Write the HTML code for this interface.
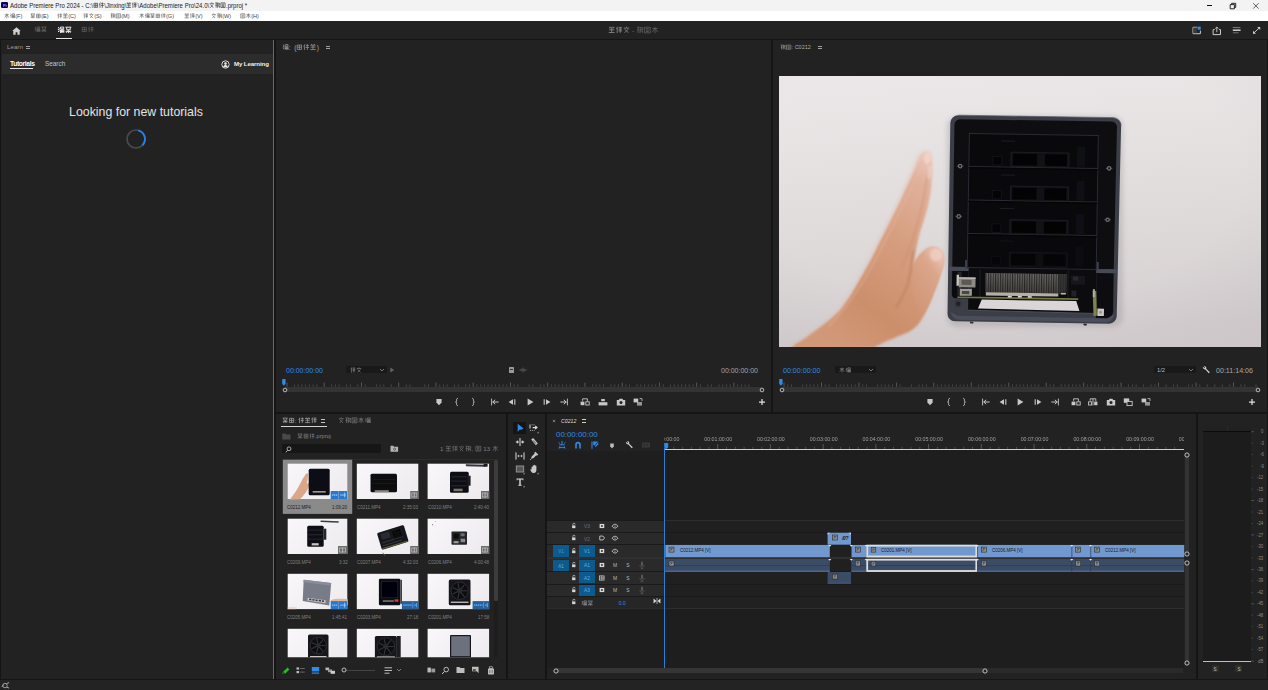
<!DOCTYPE html>
<html><head><meta charset="utf-8"><title>Adobe Premiere Pro 2024</title>
<style>
html,body{margin:0;padding:0;overflow:hidden;}
body{width:1268px;height:690px;overflow:hidden;background:#151515;position:relative;font-family:"Liberation Sans",sans-serif;}
body>div,body>svg,body>span.t,.a{position:absolute;}
span.t{white-space:nowrap;display:block;}
svg{overflow:visible;}
svg.ci{display:inline-block;margin:-3px 0;vertical-align:calc(3px - 0.12em);overflow:hidden;}
</style></head><body>
<!-- chrome -->
<div style="left:0px;top:0px;width:1268px;height:11px;background:#f3f3f3;"></div>
<div style="left:0px;top:11px;width:1268px;height:10px;background:#ffffff;"></div>
<div style="left:1.3px;top:2px;width:6.7px;height:6.2px;background:#00005b;border-radius:1.2px"></div>
<span class="t" style="left:2.5px;top:3px;font-size:4.2px;line-height:4.2px;color:#9999ff;transform:translateY(0.73px) rotate(0.01deg);font-weight:bold;letter-spacing:-0.2px">Pr</span>
<span class="t" style="left:10.3px;top:2px;font-size:6.05px;line-height:6.05px;color:#1a1a1a;transform:translateY(0.36px) rotate(0.01deg) scaleY(1.12);;transform-origin:0 50%;transform-origin:50% 2.94px">Adobe Premiere Pro 2024 - C:\<svg class="ci" width="11.20" height="5.60" viewBox="0 0 20 10" style="opacity:0.8"><g fill="none" stroke="#1a1a1a" stroke-width="1.3"><path transform="translate(0.4,0) scale(0.92,1)" d="M1.5 2h7v6.5h-7zM5 2v6.5M1.5 5.2h7"/><path transform="translate(10.4,0) scale(0.92,1)" d="M3 0.8L1 4.4M2.2 3v6.4M4.4 2.6h5M4 5.6h5.6M6.8 0.8v8.6"/></g></svg>\Jinxing\<svg class="ci" width="11.20" height="5.60" viewBox="0 0 20 10" style="opacity:0.8"><g fill="none" stroke="#1a1a1a" stroke-width="1.3"><path transform="translate(0.4,0) scale(0.92,1)" d="M1 2.2h8M1 5h8M0.6 8.6h8.8M5 2.2v6.4M3 0.6l-1 1.6M7 0.6l1 1.6"/><path transform="translate(10.4,0) scale(0.92,1)" d="M2.2 0.8v8.6M0.6 3.4l1.6-1M4.2 1.6h5M4.2 4h5M4.2 6.4h5.2M6.6 1.6v7.6"/></g></svg>\Adobe\Premiere Pro\24.0\<svg class="ci" width="16.80" height="5.60" viewBox="0 0 30 10" style="opacity:0.8"><g fill="none" stroke="#1a1a1a" stroke-width="1.3"><path transform="translate(0.4,0) scale(0.92,1)" d="M5 0.6v1.4M1 2.6h8M2.4 4l5.4 5M7.6 4L2.2 9"/><path transform="translate(10.4,0) scale(0.92,1)" d="M1 1.4h3.4M2.6 1.4v7.6M1 5h3M5.4 0.8v8.4M5.4 2h4v2.6h-4M5.4 6.4h4M9.2 6.4v2.8"/><path transform="translate(20.4,0) scale(0.92,1)" d="M1 1.4h8v7.4H1zM3 3.4h4M3 5.2h4M3 7h4"/></g></svg>.prproj *</span>
<div style="left:1206.6px;top:5.3px;width:5.8px;height:0.9px;background:#111;"></div>
<svg style="left:1229px;top:2px;" width="8" height="8" viewBox="0 0 8 8"><path d="M1.2 2.6h4.2v4.2H1.2z M2.6 2.6V1.3h4.1v4.1H5.4" fill="none" stroke="#111" stroke-width="0.9"/></svg>
<svg style="left:1252px;top:2px;" width="8" height="8" viewBox="0 0 8 8"><path d="M1.2 1.2L6.6 6.6M6.6 1.2L1.2 6.6" fill="none" stroke="#333" stroke-width="0.75"/></svg>
<span class="t" style="left:4px;top:14px;font-size:5.6px;line-height:5.6px;color:#444;transform:translateY(0.02px) rotate(0.01deg);"><svg class="ci" width="11.20" height="5.60" viewBox="0 0 20 10" style="opacity:0.75"><g fill="none" stroke="#333" stroke-width="1.2"><path transform="translate(0.4,0) scale(0.92,1)" d="M1 3h8M5 0.8v8.6M4.6 3.4L1 8M5.4 3.4L9 8"/><path transform="translate(10.4,0) scale(0.92,1)" d="M1 1.6l2 1.4-2 2h2.4M1 7.6l2.2-1M4.6 1.4h4.6v2.4H4.6zM4.6 5h4.8v4M4.6 5v4.2M6.2 5v4M7.8 5v4M4.6 7h4.8"/></g></svg>(F)</span>
<span class="t" style="left:30px;top:14px;font-size:5.6px;line-height:5.6px;color:#444;transform:translateY(0.02px) rotate(0.01deg);"><svg class="ci" width="11.20" height="5.60" viewBox="0 0 20 10" style="opacity:0.75"><g fill="none" stroke="#333" stroke-width="1.2"><path transform="translate(0.4,0) scale(0.92,1)" d="M0.8 1.6h8.4M2.6 1.6v3.4h5V1.6M1 7h8M5 5v4.4M2 9l1.6-2M8 9L6.4 7"/><path transform="translate(10.4,0) scale(0.92,1)" d="M1.5 2h7v6.5h-7zM5 2v6.5M1.5 5.2h7"/></g></svg>(E)</span>
<span class="t" style="left:56.5px;top:14px;font-size:5.6px;line-height:5.6px;color:#444;transform:translateY(0.02px) rotate(0.01deg);"><svg class="ci" width="11.20" height="5.60" viewBox="0 0 20 10" style="opacity:0.75"><g fill="none" stroke="#333" stroke-width="1.2"><path transform="translate(0.4,0) scale(0.92,1)" d="M3 0.8L1 4.4M2.2 3v6.4M4.4 2.6h5M4 5.6h5.6M6.8 0.8v8.6"/><path transform="translate(10.4,0) scale(0.92,1)" d="M1 2.2h8M1 5h8M0.6 8.6h8.8M5 2.2v6.4M3 0.6l-1 1.6M7 0.6l1 1.6"/></g></svg>(C)</span>
<span class="t" style="left:83px;top:14px;font-size:5.6px;line-height:5.6px;color:#444;transform:translateY(0.02px) rotate(0.01deg);"><svg class="ci" width="11.20" height="5.60" viewBox="0 0 20 10" style="opacity:0.75"><g fill="none" stroke="#333" stroke-width="1.2"><path transform="translate(0.4,0) scale(0.92,1)" d="M2.2 0.8v8.6M0.6 3.4l1.6-1M4.2 1.6h5M4.2 4h5M4.2 6.4h5.2M6.6 1.6v7.6"/><path transform="translate(10.4,0) scale(0.92,1)" d="M5 0.6v1.4M1 2.6h8M2.4 4l5.4 5M7.6 4L2.2 9"/></g></svg>(S)</span>
<span class="t" style="left:109.5px;top:14px;font-size:5.6px;line-height:5.6px;color:#444;transform:translateY(0.02px) rotate(0.01deg);"><svg class="ci" width="11.20" height="5.60" viewBox="0 0 20 10" style="opacity:0.75"><g fill="none" stroke="#333" stroke-width="1.2"><path transform="translate(0.4,0) scale(0.92,1)" d="M1 1.4h3.4M2.6 1.4v7.6M1 5h3M5.4 0.8v8.4M5.4 2h4v2.6h-4M5.4 6.4h4M9.2 6.4v2.8"/><path transform="translate(10.4,0) scale(0.92,1)" d="M1 1.4h8v7.4H1zM3 3.4h4M3 5.2h4M3 7h4"/></g></svg>(M)</span>
<span class="t" style="left:138.5px;top:14px;font-size:5.6px;line-height:5.6px;color:#444;transform:translateY(0.02px) rotate(0.01deg);"><svg class="ci" width="27.00" height="5.40" viewBox="0 0 50 10" style="opacity:0.75"><g fill="none" stroke="#333" stroke-width="1.2"><path transform="translate(0.4,0) scale(0.92,1)" d="M1 3h8M5 0.8v8.6M4.6 3.4L1 8M5.4 3.4L9 8"/><path transform="translate(10.4,0) scale(0.92,1)" d="M1 1.6l2 1.4-2 2h2.4M1 7.6l2.2-1M4.6 1.4h4.6v2.4H4.6zM4.6 5h4.8v4M4.6 5v4.2M6.2 5v4M7.8 5v4M4.6 7h4.8"/><path transform="translate(20.4,0) scale(0.92,1)" d="M0.8 1.6h8.4M2.6 1.6v3.4h5V1.6M1 7h8M5 5v4.4M2 9l1.6-2M8 9L6.4 7"/><path transform="translate(30.4,0) scale(0.92,1)" d="M1.5 2h7v6.5h-7zM5 2v6.5M1.5 5.2h7"/><path transform="translate(40.4,0) scale(0.92,1)" d="M3 0.8L1 4.4M2.2 3v6.4M4.4 2.6h5M4 5.6h5.6M6.8 0.8v8.6"/></g></svg>(G)</span>
<span class="t" style="left:184px;top:14px;font-size:5.6px;line-height:5.6px;color:#444;transform:translateY(0.02px) rotate(0.01deg);"><svg class="ci" width="11.20" height="5.60" viewBox="0 0 20 10" style="opacity:0.75"><g fill="none" stroke="#333" stroke-width="1.2"><path transform="translate(0.4,0) scale(0.92,1)" d="M1 2.2h8M1 5h8M0.6 8.6h8.8M5 2.2v6.4M3 0.6l-1 1.6M7 0.6l1 1.6"/><path transform="translate(10.4,0) scale(0.92,1)" d="M2.2 0.8v8.6M0.6 3.4l1.6-1M4.2 1.6h5M4.2 4h5M4.2 6.4h5.2M6.6 1.6v7.6"/></g></svg>(V)</span>
<span class="t" style="left:211px;top:14px;font-size:5.6px;line-height:5.6px;color:#444;transform:translateY(0.02px) rotate(0.01deg);"><svg class="ci" width="11.20" height="5.60" viewBox="0 0 20 10" style="opacity:0.75"><g fill="none" stroke="#333" stroke-width="1.2"><path transform="translate(0.4,0) scale(0.92,1)" d="M5 0.6v1.4M1 2.6h8M2.4 4l5.4 5M7.6 4L2.2 9"/><path transform="translate(10.4,0) scale(0.92,1)" d="M1 1.4h3.4M2.6 1.4v7.6M1 5h3M5.4 0.8v8.4M5.4 2h4v2.6h-4M5.4 6.4h4M9.2 6.4v2.8"/></g></svg>(W)</span>
<span class="t" style="left:240px;top:14px;font-size:5.6px;line-height:5.6px;color:#444;transform:translateY(0.02px) rotate(0.01deg);"><svg class="ci" width="11.20" height="5.60" viewBox="0 0 20 10" style="opacity:0.75"><g fill="none" stroke="#333" stroke-width="1.2"><path transform="translate(0.4,0) scale(0.92,1)" d="M1 1.4h8v7.4H1zM3 3.4h4M3 5.2h4M3 7h4"/><path transform="translate(10.4,0) scale(0.92,1)" d="M1 3h8M5 0.8v8.6M4.6 3.4L1 8M5.4 3.4L9 8"/></g></svg>(H)</span>
<div style="left:0px;top:21px;width:1268px;height:18px;background:#222222;"></div>
<div style="left:0px;top:39px;width:1268px;height:1px;background:#151515;"></div>
<svg style="left:11.5px;top:26.5px;" width="9" height="8" viewBox="0 0 9 8"><path d="M4.5 0.3L0.2 4.1h1.1v3.6h2.3V5.2h1.8v2.5h2.3V4.1h1.1z" fill="#cfcfcf"/></svg>
<span class="t" style="left:34px;top:27.10px;font-size:6.6px;line-height:6.6px;height:6.6px"><svg class="ci" width="13.20" height="6.60" viewBox="0 0 20 10" style="opacity:0.55"><g fill="none" stroke="#aaa" stroke-width="1.0"><path transform="translate(0.4,0) scale(0.92,1)" d="M1 1.6l2 1.4-2 2h2.4M1 7.6l2.2-1M4.6 1.4h4.6v2.4H4.6zM4.6 5h4.8v4M4.6 5v4.2M6.2 5v4M7.8 5v4M4.6 7h4.8"/><path transform="translate(10.4,0) scale(0.92,1)" d="M0.8 1.6h8.4M2.6 1.6v3.4h5V1.6M1 7h8M5 5v4.4M2 9l1.6-2M8 9L6.4 7"/></g></svg></span>
<span class="t" style="left:56.5px;top:26.60px;font-size:7.6px;line-height:7.6px;height:7.6px"><svg class="ci" width="15.20" height="7.60" viewBox="0 0 20 10" style="opacity:0.95"><g fill="none" stroke="#fff" stroke-width="1.3"><path transform="translate(0.4,0) scale(0.92,1)" d="M1 1.6l2 1.4-2 2h2.4M1 7.6l2.2-1M4.6 1.4h4.6v2.4H4.6zM4.6 5h4.8v4M4.6 5v4.2M6.2 5v4M7.8 5v4M4.6 7h4.8"/><path transform="translate(10.4,0) scale(0.92,1)" d="M0.8 1.6h8.4M2.6 1.6v3.4h5V1.6M1 7h8M5 5v4.4M2 9l1.6-2M8 9L6.4 7"/></g></svg></span>
<div style="left:56px;top:37.8px;width:16px;height:1.3px;background:#e6e6e6;"></div>
<span class="t" style="left:81px;top:27.10px;font-size:6.6px;line-height:6.6px;height:6.6px"><svg class="ci" width="13.20" height="6.60" viewBox="0 0 20 10" style="opacity:0.5"><g fill="none" stroke="#aaa" stroke-width="1.0"><path transform="translate(0.4,0) scale(0.92,1)" d="M1.5 2h7v6.5h-7zM5 2v6.5M1.5 5.2h7"/><path transform="translate(10.4,0) scale(0.92,1)" d="M3 0.8L1 4.4M2.2 3v6.4M4.4 2.6h5M4 5.6h5.6M6.8 0.8v8.6"/></g></svg></span>
<span class="t" style="left:607.5px;top:28px;font-size:6.5px;line-height:6.5px;color:#666;transform:translateY(0.17px) rotate(0.01deg);"><svg class="ci" width="22.20" height="7.40" viewBox="0 0 30 10" style="opacity:0.75"><g fill="none" stroke="#bbb" stroke-width="1.05"><path transform="translate(0.4,0) scale(0.92,1)" d="M1 2.2h8M1 5h8M0.6 8.6h8.8M5 2.2v6.4M3 0.6l-1 1.6M7 0.6l1 1.6"/><path transform="translate(10.4,0) scale(0.92,1)" d="M2.2 0.8v8.6M0.6 3.4l1.6-1M4.2 1.6h5M4.2 4h5M4.2 6.4h5.2M6.6 1.6v7.6"/><path transform="translate(20.4,0) scale(0.92,1)" d="M5 0.6v1.4M1 2.6h8M2.4 4l5.4 5M7.6 4L2.2 9"/></g></svg> - <svg class="ci" width="22.80" height="7.60" viewBox="0 0 30 10" style="opacity:0.55"><g fill="none" stroke="#999" stroke-width="1.05"><path transform="translate(0.4,0) scale(0.92,1)" d="M1 1.4h3.4M2.6 1.4v7.6M1 5h3M5.4 0.8v8.4M5.4 2h4v2.6h-4M5.4 6.4h4M9.2 6.4v2.8"/><path transform="translate(10.4,0) scale(0.92,1)" d="M1 1.4h8v7.4H1zM3 3.4h4M3 5.2h4M3 7h4"/><path transform="translate(20.4,0) scale(0.92,1)" d="M1 3h8M5 0.8v8.6M4.6 3.4L1 8M5.4 3.4L9 8"/></g></svg></span>
<svg style="left:1192px;top:26px;" width="10" height="9" viewBox="0 0 10 9"><path d="M1 1.3h4.2M1 1.3v6.4h7.4V4.6" fill="none" stroke="#ccc" stroke-width="1"/><rect x="1.3" y="1.6" width="3.6" height="5.6" fill="#3a3a3a"/><rect x="5.6" y="0.6" width="3.1" height="3.1" fill="#2d8ceb"/></svg>
<svg style="left:1212px;top:25.5px;" width="10" height="9.5" viewBox="0 0 10 9.5"><path d="M2.6 3.6H1.1v5h7.4v-5H7" fill="none" stroke="#ccc" stroke-width="1"/><path d="M4.8 6.2V1.2M3.2 2.6L4.8 1l1.6 1.6" fill="none" stroke="#ccc" stroke-width="0.9"/></svg>
<svg style="left:1232px;top:26px;" width="10" height="9" viewBox="0 0 10 9"><path d="M0.8 1.6h7.6" stroke="#999" stroke-width="0.8"/><path d="M0.8 4.2h7.8" stroke="#d0d0d0" stroke-width="1.5"/><path d="M0.8 6.8h5.8" stroke="#888" stroke-width="0.8"/></svg>
<svg style="left:1251.5px;top:26px;" width="10" height="9" viewBox="0 0 10 9"><path d="M1.4 7.4L7.8 1.4" stroke="#ccc" stroke-width="1"/><path d="M5.2 1h3v3z M1 4.8v3h3z" fill="#ccc"/></svg>
<div style="left:0px;top:679px;width:1268px;height:1px;background:#151515;"></div>
<div style="left:0px;top:680px;width:1268px;height:10px;background:#232323;"></div>
<svg style="left:1px;top:681.5px;" width="9" height="7" viewBox="0 0 9 7"><circle cx="4" cy="3.6" r="2.2" fill="none" stroke="#aaa" stroke-width="0.9"/><path d="M0.6 4.6l2-1.6M5.6 1.6l2.6-1M6 5.4l2 0.6" stroke="#ccc" stroke-width="0.8"/></svg>
<!-- layout -->
<div style="left:0px;top:40px;width:1268px;height:639px;background:#151515;"></div>
<div style="left:1px;top:40px;width:272px;height:639px;background:#222222;"></div>
<div style="left:272.8px;top:40px;width:1.5px;height:639px;background:#2b78c5;"></div>
<div style="left:276px;top:40px;width:495px;height:372px;background:#222222;"></div>
<div style="left:773px;top:40px;width:494px;height:372px;background:#222222;"></div>
<div style="left:276px;top:414px;width:230px;height:265px;background:#222222;"></div>
<div style="left:508px;top:414px;width:37px;height:265px;background:#222222;"></div>
<div style="left:547px;top:414px;width:649px;height:265px;background:#222222;"></div>
<div style="left:1198px;top:414px;width:69px;height:265px;background:#222222;"></div>
<!-- learn -->
<span class="t" style="left:6.8px;top:44px;font-size:6.2px;line-height:6.2px;color:#9a9a9a;transform:translateY(0.06px) rotate(0.01deg);">Learn</span>
<div style="left:26px;top:46.4px;width:4.4px;height:0.7px;background:#a0a0a0;"></div>
<div style="left:26px;top:48px;width:4.4px;height:0.7px;background:#a0a0a0;"></div>
<div style="left:2px;top:54px;width:270.8px;height:20px;background:#2c2c2c;"></div>
<span class="t" style="left:9.8px;top:61px;font-size:6.7px;line-height:6.7px;color:#fff;transform:translateY(0.17px) rotate(0.01deg);font-weight:bold;letter-spacing:-0.35px">Tutorials</span>
<div style="left:9.8px;top:67.9px;width:23.3px;height:1.3px;background:#e8e8e8;"></div>
<span class="t" style="left:45px;top:61px;font-size:6.4px;line-height:6.4px;color:#c4c4c4;transform:translateY(0.17px) rotate(0.01deg);">Search</span>
<svg style="left:220.5px;top:59.5px;" width="9" height="9" viewBox="0 0 9 9"><circle cx="4.5" cy="4.5" r="3.7" fill="none" stroke="#e6e6e6" stroke-width="0.9"/><circle cx="4.5" cy="3.6" r="1.3" fill="#e6e6e6"/><path d="M2.2 7.2c0.3-1.8 1.2-2.2 2.3-2.2s2 0.4 2.3 2.2z" fill="#e6e6e6"/></svg>
<span class="t" style="left:234px;top:61px;font-size:6.1px;line-height:6.1px;color:#f0f0f0;transform:translateY(0.16px) rotate(0.01deg);font-weight:bold;letter-spacing:-0.1px">My Learning</span>
<span class="t" style="left:-14.0px;width:300px;text-align:center;top:105px;font-size:12.35px;line-height:12.35px;color:#e4e4e4;transform:translateY(0.94px) rotate(0.01deg);">Looking for new tutorials</span>
<svg style="left:125px;top:128.3px;" width="22" height="22" viewBox="0 0 22 22"><circle cx="11" cy="11" r="9" fill="none" stroke="#4a4a4a" stroke-width="1.700"/><path d="M13.200 2.300A9 9 0 0 1 17.400 17.300" fill="none" stroke="#2680eb" stroke-width="1.900"/></svg>
<!-- monitors -->
<span class="t" style="left:282px;top:44px;font-size:6.6px;line-height:6.6px;color:#aaa;transform:translateY(0.67px) rotate(0.01deg);"><svg class="ci" width="6.80" height="6.80" viewBox="0 0 10 10" style="opacity:0.8"><g fill="none" stroke="#bbb" stroke-width="1.1"><path transform="translate(0.4,0) scale(0.92,1)" d="M1 1.6l2 1.4-2 2h2.4M1 7.6l2.2-1M4.6 1.4h4.6v2.4H4.6zM4.6 5h4.8v4M4.6 5v4.2M6.2 5v4M7.8 5v4M4.6 7h4.8"/></g></svg>:<svg class="ci" width="3.50" height="3.50" viewBox="0 0 10 10" style="opacity:0.0"><g fill="none" stroke="#bbb" stroke-width="1"><path transform="translate(0.4,0) scale(0.92,1)" d="M0.8 1.6h8.4M2.6 1.6v3.4h5V1.6M1 7h8M5 5v4.4M2 9l1.6-2M8 9L6.4 7"/></g></svg>(<svg class="ci" width="20.40" height="6.80" viewBox="0 0 30 10" style="opacity:0.8"><g fill="none" stroke="#bbb" stroke-width="1.1"><path transform="translate(0.4,0) scale(0.92,1)" d="M1.5 2h7v6.5h-7zM5 2v6.5M1.5 5.2h7"/><path transform="translate(10.4,0) scale(0.92,1)" d="M3 0.8L1 4.4M2.2 3v6.4M4.4 2.6h5M4 5.6h5.6M6.8 0.8v8.6"/><path transform="translate(20.4,0) scale(0.92,1)" d="M1 2.2h8M1 5h8M0.6 8.6h8.8M5 2.2v6.4M3 0.6l-1 1.6M7 0.6l1 1.6"/></g></svg>)</span>
<div style="left:326px;top:46.4px;width:4.4px;height:0.7px;background:#a0a0a0;"></div>
<div style="left:326px;top:48px;width:4.4px;height:0.7px;background:#a0a0a0;"></div>
<span class="t" style="left:286px;top:366px;font-size:7px;line-height:7px;color:#2d8ceb;transform:translateY(0.96px) rotate(0.01deg);">00:00:00:00</span>
<div style="left:346px;top:366.2px;width:41px;height:7px;background:#191919;border-radius:1px"></div>
<span class="t" style="left:349.5px;top:367.30px;font-size:6px;line-height:6px;height:6px"><svg class="ci" width="12.00" height="6.00" viewBox="0 0 20 10" style="opacity:0.7"><g fill="none" stroke="#bbb" stroke-width="1.1"><path transform="translate(0.4,0) scale(0.92,1)" d="M2.2 0.8v8.6M0.6 3.4l1.6-1M4.2 1.6h5M4.2 4h5M4.2 6.4h5.2M6.6 1.6v7.6"/><path transform="translate(10.4,0) scale(0.92,1)" d="M5 0.6v1.4M1 2.6h8M2.4 4l5.4 5M7.6 4L2.2 9"/></g></svg></span>
<svg style="left:377.0px;top:364.9px;" width="10" height="10" viewBox="0 0 10 10"><path d="M3 4l2 2 2-2" fill="none" stroke="#808080" stroke-width="0.9"/></svg>
<svg style="left:386.5px;top:365.2px;" width="10" height="10" viewBox="0 0 10 10"><path d="M3.400 2.600v4.800L7 5z" fill="#666"/></svg>
<div style="left:508.5px;top:367px;width:5.4px;height:5.6px;background:#9a9a9a;border-radius:0.6px"></div>
<div style="left:509.6px;top:369.4px;width:3.2px;height:0.9px;background:#333;"></div>
<svg style="left:518.0px;top:365.0px;" width="10" height="10" viewBox="0 0 10 10"><path d="M1.400 5h2.200M6.400 5h2.200M5 2.600v4.800M3.200 3.800L4.200 5l-1 1.200M6.800 3.800L5.800 5l1 1.200" fill="none" stroke="#666" stroke-width="0.8"/></svg>
<span class="t" style="right:510.5px;top:366px;font-size:7px;line-height:7px;color:#a6a6a6;transform:translateY(0.96px) rotate(0.01deg);">00:00:00:00</span>
<svg style="left:0px;top:0px;pointer-events:none" width="1268" height="690" viewBox="0 0 1268 690"><path d="M287.0 386.8v-4.2" stroke="#8a8a8a" stroke-width="0.7" opacity="0.75"/><path d="M294.4 386.8v-2.4" stroke="#8a8a8a" stroke-width="0.7" opacity="0.5"/><path d="M298.2 386.8v-2.4" stroke="#8a8a8a" stroke-width="0.7" opacity="0.5"/><path d="M301.9 386.8v-2.4" stroke="#8a8a8a" stroke-width="0.7" opacity="0.5"/><path d="M305.6 386.8v-2.4" stroke="#8a8a8a" stroke-width="0.7" opacity="0.5"/><path d="M309.3 386.8v-2.4" stroke="#8a8a8a" stroke-width="0.7" opacity="0.5"/><path d="M313.1 386.8v-2.4" stroke="#8a8a8a" stroke-width="0.7" opacity="0.5"/><path d="M316.8 386.8v-2.4" stroke="#8a8a8a" stroke-width="0.7" opacity="0.5"/><path d="M324.2 386.8v-4.2" stroke="#8a8a8a" stroke-width="0.7" opacity="0.75"/><path d="M331.7 386.8v-2.4" stroke="#8a8a8a" stroke-width="0.7" opacity="0.5"/><path d="M335.4 386.8v-2.4" stroke="#8a8a8a" stroke-width="0.7" opacity="0.5"/><path d="M339.1 386.8v-2.4" stroke="#8a8a8a" stroke-width="0.7" opacity="0.5"/><path d="M346.6 386.8v-2.4" stroke="#8a8a8a" stroke-width="0.7" opacity="0.5"/><path d="M350.3 386.8v-2.4" stroke="#8a8a8a" stroke-width="0.7" opacity="0.5"/><path d="M357.8 386.8v-2.4" stroke="#8a8a8a" stroke-width="0.7" opacity="0.5"/><path d="M361.5 386.8v-4.2" stroke="#8a8a8a" stroke-width="0.7" opacity="0.75"/><path d="M365.2 386.8v-2.4" stroke="#8a8a8a" stroke-width="0.7" opacity="0.5"/><path d="M376.4 386.8v-2.4" stroke="#8a8a8a" stroke-width="0.7" opacity="0.5"/><path d="M380.1 386.8v-2.4" stroke="#8a8a8a" stroke-width="0.7" opacity="0.5"/><path d="M383.8 386.8v-2.4" stroke="#8a8a8a" stroke-width="0.7" opacity="0.5"/><path d="M391.3 386.8v-2.4" stroke="#8a8a8a" stroke-width="0.7" opacity="0.5"/><path d="M398.7 386.8v-4.2" stroke="#8a8a8a" stroke-width="0.7" opacity="0.75"/><path d="M406.2 386.8v-2.4" stroke="#8a8a8a" stroke-width="0.7" opacity="0.5"/><path d="M409.9 386.8v-2.4" stroke="#8a8a8a" stroke-width="0.7" opacity="0.5"/><path d="M424.8 386.8v-2.4" stroke="#8a8a8a" stroke-width="0.7" opacity="0.5"/><path d="M428.5 386.8v-2.4" stroke="#8a8a8a" stroke-width="0.7" opacity="0.5"/><path d="M436.0 386.8v-4.2" stroke="#8a8a8a" stroke-width="0.7" opacity="0.75"/><path d="M439.7 386.8v-2.4" stroke="#8a8a8a" stroke-width="0.7" opacity="0.5"/><path d="M443.4 386.8v-2.4" stroke="#8a8a8a" stroke-width="0.7" opacity="0.5"/><path d="M447.1 386.8v-2.4" stroke="#8a8a8a" stroke-width="0.7" opacity="0.5"/><path d="M454.6 386.8v-2.4" stroke="#8a8a8a" stroke-width="0.7" opacity="0.5"/><path d="M458.3 386.8v-2.4" stroke="#8a8a8a" stroke-width="0.7" opacity="0.5"/><path d="M465.8 386.8v-2.4" stroke="#8a8a8a" stroke-width="0.7" opacity="0.5"/><path d="M469.5 386.8v-2.4" stroke="#8a8a8a" stroke-width="0.7" opacity="0.5"/><path d="M473.2 386.8v-4.2" stroke="#8a8a8a" stroke-width="0.7" opacity="0.75"/><path d="M476.9 386.8v-2.4" stroke="#8a8a8a" stroke-width="0.7" opacity="0.5"/><path d="M480.7 386.8v-2.4" stroke="#8a8a8a" stroke-width="0.7" opacity="0.5"/><path d="M484.4 386.8v-2.4" stroke="#8a8a8a" stroke-width="0.7" opacity="0.5"/><path d="M488.1 386.8v-2.4" stroke="#8a8a8a" stroke-width="0.7" opacity="0.5"/><path d="M491.8 386.8v-2.4" stroke="#8a8a8a" stroke-width="0.7" opacity="0.5"/><path d="M495.6 386.8v-2.4" stroke="#8a8a8a" stroke-width="0.7" opacity="0.5"/><path d="M499.3 386.8v-2.4" stroke="#8a8a8a" stroke-width="0.7" opacity="0.5"/><path d="M503.0 386.8v-2.4" stroke="#8a8a8a" stroke-width="0.7" opacity="0.5"/><path d="M506.7 386.8v-2.4" stroke="#8a8a8a" stroke-width="0.7" opacity="0.5"/><path d="M510.5 386.8v-4.2" stroke="#8a8a8a" stroke-width="0.7" opacity="0.75"/><path d="M514.2 386.8v-2.4" stroke="#8a8a8a" stroke-width="0.7" opacity="0.5"/><path d="M517.9 386.8v-2.4" stroke="#8a8a8a" stroke-width="0.7" opacity="0.5"/><path d="M529.1 386.8v-2.4" stroke="#8a8a8a" stroke-width="0.7" opacity="0.5"/><path d="M532.8 386.8v-2.4" stroke="#8a8a8a" stroke-width="0.7" opacity="0.5"/><path d="M540.3 386.8v-2.4" stroke="#8a8a8a" stroke-width="0.7" opacity="0.5"/><path d="M544.0 386.8v-2.4" stroke="#8a8a8a" stroke-width="0.7" opacity="0.5"/><path d="M547.7 386.8v-4.2" stroke="#8a8a8a" stroke-width="0.7" opacity="0.75"/><path d="M551.4 386.8v-2.4" stroke="#8a8a8a" stroke-width="0.7" opacity="0.5"/><path d="M555.2 386.8v-2.4" stroke="#8a8a8a" stroke-width="0.7" opacity="0.5"/><path d="M558.9 386.8v-2.4" stroke="#8a8a8a" stroke-width="0.7" opacity="0.5"/><path d="M562.6 386.8v-2.4" stroke="#8a8a8a" stroke-width="0.7" opacity="0.5"/><path d="M566.3 386.8v-2.4" stroke="#8a8a8a" stroke-width="0.7" opacity="0.5"/><path d="M570.1 386.8v-2.4" stroke="#8a8a8a" stroke-width="0.7" opacity="0.5"/><path d="M573.8 386.8v-2.4" stroke="#8a8a8a" stroke-width="0.7" opacity="0.5"/><path d="M577.5 386.8v-2.4" stroke="#8a8a8a" stroke-width="0.7" opacity="0.5"/><path d="M585.0 386.8v-4.2" stroke="#8a8a8a" stroke-width="0.7" opacity="0.75"/><path d="M592.4 386.8v-2.4" stroke="#8a8a8a" stroke-width="0.7" opacity="0.5"/><path d="M596.1 386.8v-2.4" stroke="#8a8a8a" stroke-width="0.7" opacity="0.5"/><path d="M599.9 386.8v-2.4" stroke="#8a8a8a" stroke-width="0.7" opacity="0.5"/><path d="M603.6 386.8v-2.4" stroke="#8a8a8a" stroke-width="0.7" opacity="0.5"/><path d="M611.0 386.8v-2.4" stroke="#8a8a8a" stroke-width="0.7" opacity="0.5"/><path d="M614.7 386.8v-2.4" stroke="#8a8a8a" stroke-width="0.7" opacity="0.5"/><path d="M618.5 386.8v-2.4" stroke="#8a8a8a" stroke-width="0.7" opacity="0.5"/><path d="M622.2 386.8v-4.2" stroke="#8a8a8a" stroke-width="0.7" opacity="0.75"/><path d="M625.9 386.8v-2.4" stroke="#8a8a8a" stroke-width="0.7" opacity="0.5"/><path d="M629.6 386.8v-2.4" stroke="#8a8a8a" stroke-width="0.7" opacity="0.5"/><path d="M637.1 386.8v-2.4" stroke="#8a8a8a" stroke-width="0.7" opacity="0.5"/><path d="M640.8 386.8v-2.4" stroke="#8a8a8a" stroke-width="0.7" opacity="0.5"/><path d="M644.5 386.8v-2.4" stroke="#8a8a8a" stroke-width="0.7" opacity="0.5"/><path d="M648.3 386.8v-2.4" stroke="#8a8a8a" stroke-width="0.7" opacity="0.5"/><path d="M652.0 386.8v-2.4" stroke="#8a8a8a" stroke-width="0.7" opacity="0.5"/><path d="M655.7 386.8v-2.4" stroke="#8a8a8a" stroke-width="0.7" opacity="0.5"/><path d="M659.4 386.8v-4.2" stroke="#8a8a8a" stroke-width="0.7" opacity="0.75"/><path d="M663.2 386.8v-2.4" stroke="#8a8a8a" stroke-width="0.7" opacity="0.5"/><path d="M670.6 386.8v-2.4" stroke="#8a8a8a" stroke-width="0.7" opacity="0.5"/><path d="M674.3 386.8v-2.4" stroke="#8a8a8a" stroke-width="0.7" opacity="0.5"/><path d="M678.1 386.8v-2.4" stroke="#8a8a8a" stroke-width="0.7" opacity="0.5"/><path d="M681.8 386.8v-2.4" stroke="#8a8a8a" stroke-width="0.7" opacity="0.5"/><path d="M685.5 386.8v-2.4" stroke="#8a8a8a" stroke-width="0.7" opacity="0.5"/><path d="M689.2 386.8v-2.4" stroke="#8a8a8a" stroke-width="0.7" opacity="0.5"/><path d="M693.0 386.8v-2.4" stroke="#8a8a8a" stroke-width="0.7" opacity="0.5"/><path d="M696.7 386.8v-4.2" stroke="#8a8a8a" stroke-width="0.7" opacity="0.75"/><path d="M700.4 386.8v-2.4" stroke="#8a8a8a" stroke-width="0.7" opacity="0.5"/><path d="M707.9 386.8v-2.4" stroke="#8a8a8a" stroke-width="0.7" opacity="0.5"/><path d="M711.6 386.8v-2.4" stroke="#8a8a8a" stroke-width="0.7" opacity="0.5"/><path d="M719.0 386.8v-2.4" stroke="#8a8a8a" stroke-width="0.7" opacity="0.5"/><path d="M722.8 386.8v-2.4" stroke="#8a8a8a" stroke-width="0.7" opacity="0.5"/><path d="M726.5 386.8v-2.4" stroke="#8a8a8a" stroke-width="0.7" opacity="0.5"/><path d="M730.2 386.8v-2.4" stroke="#8a8a8a" stroke-width="0.7" opacity="0.5"/><path d="M733.9 386.8v-4.2" stroke="#8a8a8a" stroke-width="0.7" opacity="0.75"/><path d="M737.7 386.8v-2.4" stroke="#8a8a8a" stroke-width="0.7" opacity="0.5"/><path d="M741.4 386.8v-2.4" stroke="#8a8a8a" stroke-width="0.7" opacity="0.5"/><path d="M745.1 386.8v-2.4" stroke="#8a8a8a" stroke-width="0.7" opacity="0.5"/><path d="M748.8 386.8v-2.4" stroke="#8a8a8a" stroke-width="0.7" opacity="0.5"/></svg>
<div style="left:285px;top:387.3px;width:477px;height:4.8px;background:#333;"></div>
<svg style="left:281.6px;top:379.2px;" width="4" height="7" viewBox="0 0 4 7"><path d="M0.200 0.500a0.500 0.500 0 0 1 0.500-0.500h2.400a0.500 0.500 0 0 1 0.500 0.500v4.200L1.900 6.800 0.200 4.700z" fill="#2d8ceb"/></svg>
<svg style="left:280.4px;top:384.6px;" width="10" height="10" viewBox="0 0 10 10"><circle cx="5" cy="5" r="1.850" fill="#2a2a2a" stroke="#d0d0d0" stroke-width="0.850"/></svg>
<svg style="left:757.0px;top:384.6px;" width="10" height="10" viewBox="0 0 10 10"><circle cx="5" cy="5" r="1.850" fill="#2a2a2a" stroke="#d0d0d0" stroke-width="0.850"/></svg>
<svg style="left:434.0px;top:397.0px;" width="10" height="10" viewBox="0 0 10 10"><path d="M2.4 2h5.2v3.6L5 8.2 2.4 5.6z" fill="#c8c8c8"/></svg>
<svg style="left:452.0px;top:397.0px;" width="10" height="10" viewBox="0 0 10 10"><path d="M5.8 1.4C4.6 1.4 4.6 2 4.6 3.2S4.4 5 3.6 5c0.8 0 1 0.6 1 1.8s0 1.8 1.2 1.8" fill="none" stroke="#c8c8c8" stroke-width="0.9"/></svg>
<svg style="left:468.0px;top:397.0px;" width="10" height="10" viewBox="0 0 10 10"><path d="M4.2 1.4c1.2 0 1.2 0.600 1.2 1.8S5.600 5 6.400 5c-0.800 0-1 0.600-1 1.800s0 1.800-1.200 1.800" fill="none" stroke="#c8c8c8" stroke-width="0.9"/></svg>
<svg style="left:490.0px;top:397.0px;" width="10" height="10" viewBox="0 0 10 10"><path d="M1.6 1.600v6.800" stroke="#c8c8c8" stroke-width="0.9"/><path d="M2.600 5h6M5.200 2.800L2.800 5l2.400 2.200" fill="none" stroke="#c8c8c8" stroke-width="1"/></svg>
<svg style="left:507.0px;top:397.0px;" width="10" height="10" viewBox="0 0 10 10"><path d="M6 2.200v5.600L1.600 5z" fill="#c8c8c8"/><path d="M7.800 2.200v5.600" stroke="#c8c8c8" stroke-width="1.1"/></svg>
<svg style="left:524.5px;top:397.0px;" width="10" height="10" viewBox="0 0 10 10"><path d="M2.600 1.400v7.200L8.400 5z" fill="#c8c8c8"/></svg>
<svg style="left:541.7px;top:397.0px;" width="10" height="10" viewBox="0 0 10 10"><path d="M4 2.200v5.600L8.400 5z" fill="#c8c8c8"/><path d="M2.200 2.200v5.600" stroke="#c8c8c8" stroke-width="1.1"/></svg>
<svg style="left:559.4px;top:397.0px;" width="10" height="10" viewBox="0 0 10 10"><path d="M8.400 1.600v6.800" stroke="#c8c8c8" stroke-width="0.9"/><path d="M7.400 5h-6M4.800 2.800L7.200 5 4.800 7.200" fill="none" stroke="#c8c8c8" stroke-width="1"/></svg>
<svg style="left:580.0px;top:397.0px;" width="10" height="10" viewBox="0 0 10 10"><rect x="0.600" y="4.600" width="3.800" height="3.600" fill="#c8c8c8"/><rect x="5.800" y="4.800" width="3.400" height="3.200" fill="none" stroke="#c8c8c8" stroke-width="0.9"/><path d="M2.600 3.800V1.800h4.800v2.400" fill="none" stroke="#c8c8c8" stroke-width="0.9"/></svg>
<svg style="left:597.7px;top:397.0px;" width="10" height="10" viewBox="0 0 10 10"><rect x="0.600" y="5.200" width="8.800" height="3.200" fill="#c8c8c8"/><rect x="3.200" y="2" width="3.600" height="2.200" fill="#c8c8c8"/></svg>
<svg style="left:615.8px;top:397.0px;" width="10" height="10" viewBox="0 0 10 10"><path d="M0.800 3h2l0.800-1.200h2.800L7.200 3h2v5.400H0.800z" fill="#c8c8c8"/><circle cx="5" cy="5.600" r="1.500" fill="#222"/></svg>
<svg style="left:633.0px;top:397.0px;" width="10" height="10" viewBox="0 0 10 10"><rect x="0.600" y="1.600" width="4.600" height="3.800" fill="#c8c8c8"/><rect x="4" y="5" width="5" height="3.600" fill="#c8c8c8" opacity="0.7"/><path d="M6.600 1.600h2.400v2.400" fill="none" stroke="#c8c8c8" stroke-width="0.8"/></svg>
<svg style="left:756.6px;top:396.7px;" width="10" height="10" viewBox="0 0 10 10"><path d="M5 2v6M2 5h6" stroke="#e0e0e0" stroke-width="1.250"/></svg>
<span class="t" style="left:779.5px;top:45px;font-size:5.5px;line-height:5.5px;color:#aaa;transform:translateY(0.16px) rotate(0.01deg);"><svg class="ci" width="11.60" height="5.80" viewBox="0 0 20 10" style="opacity:0.8"><g fill="none" stroke="#bbb" stroke-width="1.1"><path transform="translate(0.4,0) scale(0.92,1)" d="M1 1.4h3.4M2.6 1.4v7.6M1 5h3M5.4 0.8v8.4M5.4 2h4v2.6h-4M5.4 6.4h4M9.2 6.4v2.8"/><path transform="translate(10.4,0) scale(0.92,1)" d="M1 1.4h8v7.4H1zM3 3.4h4M3 5.2h4M3 7h4"/></g></svg>: C0212</span>
<div style="left:817.5px;top:46.4px;width:4.4px;height:0.7px;background:#a0a0a0;"></div>
<div style="left:817.5px;top:48px;width:4.4px;height:0.7px;background:#a0a0a0;"></div>
<span class="t" style="left:782.6px;top:367px;font-size:7.1px;line-height:7.1px;color:#2d8ceb;transform:translateY(0.96px) rotate(0.01deg);">00:00:00:00</span>
<div style="left:834.5px;top:366.2px;width:41px;height:7px;background:#191919;border-radius:1px"></div>
<span class="t" style="left:838.5px;top:367.30px;font-size:6px;line-height:6px;height:6px"><svg class="ci" width="12.00" height="6.00" viewBox="0 0 20 10" style="opacity:0.7"><g fill="none" stroke="#bbb" stroke-width="1.1"><path transform="translate(0.4,0) scale(0.92,1)" d="M1 3h8M5 0.8v8.6M4.6 3.4L1 8M5.4 3.4L9 8"/><path transform="translate(10.4,0) scale(0.92,1)" d="M1 1.6l2 1.4-2 2h2.4M1 7.6l2.2-1M4.6 1.4h4.6v2.4H4.6zM4.6 5h4.8v4M4.6 5v4.2M6.2 5v4M7.8 5v4M4.6 7h4.8"/></g></svg></span>
<svg style="left:866.0px;top:364.9px;" width="10" height="10" viewBox="0 0 10 10"><path d="M3 4l2 2 2-2" fill="none" stroke="#808080" stroke-width="0.9"/></svg>
<div style="left:1154px;top:366.2px;width:41.5px;height:7px;background:#191919;border-radius:1px"></div>
<span class="t" style="left:1157px;top:368px;font-size:5.8px;line-height:5.8px;color:#bbb;transform:translateY(0.13px) rotate(0.01deg);">1/2</span>
<svg style="left:1186.0px;top:364.9px;" width="10" height="10" viewBox="0 0 10 10"><path d="M3 4l2 2 2-2" fill="none" stroke="#808080" stroke-width="0.9"/></svg>
<svg style="left:1200.5px;top:364.6px;" width="10" height="10" viewBox="0 0 10 10"><path d="M2 1.400a2.200 2.200 0 0 0 2.400 3l3.400 3.800 1-1-3.600-3.400A2.200 2.200 0 0 0 3 1l1 1.400-0.800 0.800z" fill="#d0d0d0"/></svg>
<span class="t" style="right:14.700000000000045px;top:367px;font-size:7.1px;line-height:7.1px;color:#a6a6a6;transform:translateY(0.96px) rotate(0.01deg);">00:11:14:06</span>
<svg style="left:0px;top:0px;pointer-events:none" width="1268" height="690" viewBox="0 0 1268 690"><path d="M784.0 386.8v-4.2" stroke="#8a8a8a" stroke-width="0.7" opacity="0.75"/><path d="M787.7 386.8v-2.4" stroke="#8a8a8a" stroke-width="0.7" opacity="0.5"/><path d="M791.5 386.8v-2.4" stroke="#8a8a8a" stroke-width="0.7" opacity="0.5"/><path d="M802.7 386.8v-2.4" stroke="#8a8a8a" stroke-width="0.7" opacity="0.5"/><path d="M806.5 386.8v-2.4" stroke="#8a8a8a" stroke-width="0.7" opacity="0.5"/><path d="M810.2 386.8v-2.4" stroke="#8a8a8a" stroke-width="0.7" opacity="0.5"/><path d="M814.0 386.8v-2.4" stroke="#8a8a8a" stroke-width="0.7" opacity="0.5"/><path d="M817.7 386.8v-2.4" stroke="#8a8a8a" stroke-width="0.7" opacity="0.5"/><path d="M821.5 386.8v-4.2" stroke="#8a8a8a" stroke-width="0.7" opacity="0.75"/><path d="M825.2 386.8v-2.4" stroke="#8a8a8a" stroke-width="0.7" opacity="0.5"/><path d="M829.0 386.8v-2.4" stroke="#8a8a8a" stroke-width="0.7" opacity="0.5"/><path d="M836.4 386.8v-2.4" stroke="#8a8a8a" stroke-width="0.7" opacity="0.5"/><path d="M840.2 386.8v-2.4" stroke="#8a8a8a" stroke-width="0.7" opacity="0.5"/><path d="M843.9 386.8v-2.4" stroke="#8a8a8a" stroke-width="0.7" opacity="0.5"/><path d="M847.7 386.8v-2.4" stroke="#8a8a8a" stroke-width="0.7" opacity="0.5"/><path d="M851.4 386.8v-2.4" stroke="#8a8a8a" stroke-width="0.7" opacity="0.5"/><path d="M855.2 386.8v-2.4" stroke="#8a8a8a" stroke-width="0.7" opacity="0.5"/><path d="M858.9 386.8v-4.2" stroke="#8a8a8a" stroke-width="0.7" opacity="0.75"/><path d="M862.7 386.8v-2.4" stroke="#8a8a8a" stroke-width="0.7" opacity="0.5"/><path d="M866.4 386.8v-2.4" stroke="#8a8a8a" stroke-width="0.7" opacity="0.5"/><path d="M877.7 386.8v-2.4" stroke="#8a8a8a" stroke-width="0.7" opacity="0.5"/><path d="M881.4 386.8v-2.4" stroke="#8a8a8a" stroke-width="0.7" opacity="0.5"/><path d="M885.1 386.8v-2.4" stroke="#8a8a8a" stroke-width="0.7" opacity="0.5"/><path d="M888.9 386.8v-2.4" stroke="#8a8a8a" stroke-width="0.7" opacity="0.5"/><path d="M892.6 386.8v-2.4" stroke="#8a8a8a" stroke-width="0.7" opacity="0.5"/><path d="M896.4 386.8v-4.2" stroke="#8a8a8a" stroke-width="0.7" opacity="0.75"/><path d="M900.1 386.8v-2.4" stroke="#8a8a8a" stroke-width="0.7" opacity="0.5"/><path d="M911.4 386.8v-2.4" stroke="#8a8a8a" stroke-width="0.7" opacity="0.5"/><path d="M918.9 386.8v-2.4" stroke="#8a8a8a" stroke-width="0.7" opacity="0.5"/><path d="M922.6 386.8v-2.4" stroke="#8a8a8a" stroke-width="0.7" opacity="0.5"/><path d="M926.3 386.8v-2.4" stroke="#8a8a8a" stroke-width="0.7" opacity="0.5"/><path d="M933.8 386.8v-4.2" stroke="#8a8a8a" stroke-width="0.7" opacity="0.75"/><path d="M937.6 386.8v-2.4" stroke="#8a8a8a" stroke-width="0.7" opacity="0.5"/><path d="M941.3 386.8v-2.4" stroke="#8a8a8a" stroke-width="0.7" opacity="0.5"/><path d="M945.1 386.8v-2.4" stroke="#8a8a8a" stroke-width="0.7" opacity="0.5"/><path d="M948.8 386.8v-2.4" stroke="#8a8a8a" stroke-width="0.7" opacity="0.5"/><path d="M952.6 386.8v-2.4" stroke="#8a8a8a" stroke-width="0.7" opacity="0.5"/><path d="M956.3 386.8v-2.4" stroke="#8a8a8a" stroke-width="0.7" opacity="0.5"/><path d="M960.1 386.8v-2.4" stroke="#8a8a8a" stroke-width="0.7" opacity="0.5"/><path d="M963.8 386.8v-2.4" stroke="#8a8a8a" stroke-width="0.7" opacity="0.5"/><path d="M967.6 386.8v-2.4" stroke="#8a8a8a" stroke-width="0.7" opacity="0.5"/><path d="M971.3 386.8v-4.2" stroke="#8a8a8a" stroke-width="0.7" opacity="0.75"/><path d="M978.8 386.8v-2.4" stroke="#8a8a8a" stroke-width="0.7" opacity="0.5"/><path d="M982.5 386.8v-2.4" stroke="#8a8a8a" stroke-width="0.7" opacity="0.5"/><path d="M986.3 386.8v-2.4" stroke="#8a8a8a" stroke-width="0.7" opacity="0.5"/><path d="M990.0 386.8v-2.4" stroke="#8a8a8a" stroke-width="0.7" opacity="0.5"/><path d="M993.8 386.8v-2.4" stroke="#8a8a8a" stroke-width="0.7" opacity="0.5"/><path d="M997.5 386.8v-2.4" stroke="#8a8a8a" stroke-width="0.7" opacity="0.5"/><path d="M1001.3 386.8v-2.4" stroke="#8a8a8a" stroke-width="0.7" opacity="0.5"/><path d="M1005.0 386.8v-2.4" stroke="#8a8a8a" stroke-width="0.7" opacity="0.5"/><path d="M1008.8 386.8v-4.2" stroke="#8a8a8a" stroke-width="0.7" opacity="0.75"/><path d="M1012.5 386.8v-2.4" stroke="#8a8a8a" stroke-width="0.7" opacity="0.5"/><path d="M1016.3 386.8v-2.4" stroke="#8a8a8a" stroke-width="0.7" opacity="0.5"/><path d="M1020.0 386.8v-2.4" stroke="#8a8a8a" stroke-width="0.7" opacity="0.5"/><path d="M1023.7 386.8v-2.4" stroke="#8a8a8a" stroke-width="0.7" opacity="0.5"/><path d="M1027.5 386.8v-2.4" stroke="#8a8a8a" stroke-width="0.7" opacity="0.5"/><path d="M1031.2 386.8v-2.4" stroke="#8a8a8a" stroke-width="0.7" opacity="0.5"/><path d="M1035.0 386.8v-2.4" stroke="#8a8a8a" stroke-width="0.7" opacity="0.5"/><path d="M1038.7 386.8v-2.4" stroke="#8a8a8a" stroke-width="0.7" opacity="0.5"/><path d="M1046.2 386.8v-4.2" stroke="#8a8a8a" stroke-width="0.7" opacity="0.75"/><path d="M1050.0 386.8v-2.4" stroke="#8a8a8a" stroke-width="0.7" opacity="0.5"/><path d="M1053.7 386.8v-2.4" stroke="#8a8a8a" stroke-width="0.7" opacity="0.5"/><path d="M1061.2 386.8v-2.4" stroke="#8a8a8a" stroke-width="0.7" opacity="0.5"/><path d="M1065.0 386.8v-2.4" stroke="#8a8a8a" stroke-width="0.7" opacity="0.5"/><path d="M1068.7 386.8v-2.4" stroke="#8a8a8a" stroke-width="0.7" opacity="0.5"/><path d="M1072.4 386.8v-2.4" stroke="#8a8a8a" stroke-width="0.7" opacity="0.5"/><path d="M1076.2 386.8v-2.4" stroke="#8a8a8a" stroke-width="0.7" opacity="0.5"/><path d="M1079.9 386.8v-2.4" stroke="#8a8a8a" stroke-width="0.7" opacity="0.5"/><path d="M1083.7 386.8v-4.2" stroke="#8a8a8a" stroke-width="0.7" opacity="0.75"/><path d="M1087.4 386.8v-2.4" stroke="#8a8a8a" stroke-width="0.7" opacity="0.5"/><path d="M1091.2 386.8v-2.4" stroke="#8a8a8a" stroke-width="0.7" opacity="0.5"/><path d="M1094.9 386.8v-2.4" stroke="#8a8a8a" stroke-width="0.7" opacity="0.5"/><path d="M1098.7 386.8v-2.4" stroke="#8a8a8a" stroke-width="0.7" opacity="0.5"/><path d="M1102.4 386.8v-2.4" stroke="#8a8a8a" stroke-width="0.7" opacity="0.5"/><path d="M1109.9 386.8v-2.4" stroke="#8a8a8a" stroke-width="0.7" opacity="0.5"/><path d="M1113.7 386.8v-2.4" stroke="#8a8a8a" stroke-width="0.7" opacity="0.5"/><path d="M1117.4 386.8v-2.4" stroke="#8a8a8a" stroke-width="0.7" opacity="0.5"/><path d="M1121.1 386.8v-4.2" stroke="#8a8a8a" stroke-width="0.7" opacity="0.75"/><path d="M1128.6 386.8v-2.4" stroke="#8a8a8a" stroke-width="0.7" opacity="0.5"/><path d="M1132.4 386.8v-2.4" stroke="#8a8a8a" stroke-width="0.7" opacity="0.5"/><path d="M1136.1 386.8v-2.4" stroke="#8a8a8a" stroke-width="0.7" opacity="0.5"/><path d="M1143.6 386.8v-2.4" stroke="#8a8a8a" stroke-width="0.7" opacity="0.5"/><path d="M1151.1 386.8v-2.4" stroke="#8a8a8a" stroke-width="0.7" opacity="0.5"/><path d="M1154.9 386.8v-2.4" stroke="#8a8a8a" stroke-width="0.7" opacity="0.5"/><path d="M1158.6 386.8v-4.2" stroke="#8a8a8a" stroke-width="0.7" opacity="0.75"/><path d="M1166.1 386.8v-2.4" stroke="#8a8a8a" stroke-width="0.7" opacity="0.5"/><path d="M1173.6 386.8v-2.4" stroke="#8a8a8a" stroke-width="0.7" opacity="0.5"/><path d="M1177.3 386.8v-2.4" stroke="#8a8a8a" stroke-width="0.7" opacity="0.5"/><path d="M1188.6 386.8v-2.4" stroke="#8a8a8a" stroke-width="0.7" opacity="0.5"/><path d="M1192.3 386.8v-2.4" stroke="#8a8a8a" stroke-width="0.7" opacity="0.5"/><path d="M1196.1 386.8v-4.2" stroke="#8a8a8a" stroke-width="0.7" opacity="0.75"/><path d="M1199.8 386.8v-2.4" stroke="#8a8a8a" stroke-width="0.7" opacity="0.5"/><path d="M1207.3 386.8v-2.4" stroke="#8a8a8a" stroke-width="0.7" opacity="0.5"/><path d="M1214.8 386.8v-2.4" stroke="#8a8a8a" stroke-width="0.7" opacity="0.5"/><path d="M1222.3 386.8v-2.4" stroke="#8a8a8a" stroke-width="0.7" opacity="0.5"/><path d="M1229.8 386.8v-2.4" stroke="#8a8a8a" stroke-width="0.7" opacity="0.5"/><path d="M1233.5 386.8v-4.2" stroke="#8a8a8a" stroke-width="0.7" opacity="0.75"/><path d="M1241.0 386.8v-2.4" stroke="#8a8a8a" stroke-width="0.7" opacity="0.5"/><path d="M1244.8 386.8v-2.4" stroke="#8a8a8a" stroke-width="0.7" opacity="0.5"/><path d="M1256.0 386.8v-2.4" stroke="#8a8a8a" stroke-width="0.7" opacity="0.5"/></svg>
<div style="left:782px;top:387.3px;width:476px;height:4.8px;background:#333;"></div>
<svg style="left:778.8px;top:379.2px;" width="4" height="7" viewBox="0 0 4 7"><path d="M0.200 0.500a0.500 0.500 0 0 1 0.500-0.500h2.400a0.500 0.500 0 0 1 0.500 0.500v4.200L1.900 6.800 0.200 4.700z" fill="#2d8ceb"/></svg>
<svg style="left:777.0px;top:384.6px;" width="10" height="10" viewBox="0 0 10 10"><circle cx="5" cy="5" r="1.850" fill="#2a2a2a" stroke="#d0d0d0" stroke-width="0.850"/></svg>
<svg style="left:1253.0px;top:384.6px;" width="10" height="10" viewBox="0 0 10 10"><circle cx="5" cy="5" r="1.850" fill="#2a2a2a" stroke="#d0d0d0" stroke-width="0.850"/></svg>
<svg style="left:925.0px;top:397.0px;" width="10" height="10" viewBox="0 0 10 10"><path d="M2.4 2h5.2v3.6L5 8.2 2.4 5.6z" fill="#c8c8c8"/></svg>
<svg style="left:943.7px;top:397.0px;" width="10" height="10" viewBox="0 0 10 10"><path d="M5.8 1.4C4.6 1.4 4.6 2 4.6 3.2S4.4 5 3.6 5c0.8 0 1 0.6 1 1.8s0 1.8 1.2 1.8" fill="none" stroke="#c8c8c8" stroke-width="0.9"/></svg>
<svg style="left:958.6px;top:397.0px;" width="10" height="10" viewBox="0 0 10 10"><path d="M4.2 1.4c1.2 0 1.2 0.600 1.2 1.8S5.600 5 6.400 5c-0.800 0-1 0.600-1 1.800s0 1.800-1.200 1.800" fill="none" stroke="#c8c8c8" stroke-width="0.9"/></svg>
<svg style="left:981.0px;top:397.0px;" width="10" height="10" viewBox="0 0 10 10"><path d="M1.6 1.600v6.800" stroke="#c8c8c8" stroke-width="0.9"/><path d="M2.600 5h6M5.200 2.800L2.800 5l2.400 2.200" fill="none" stroke="#c8c8c8" stroke-width="1"/></svg>
<svg style="left:998.3px;top:397.0px;" width="10" height="10" viewBox="0 0 10 10"><path d="M6 2.200v5.600L1.600 5z" fill="#c8c8c8"/><path d="M7.800 2.200v5.600" stroke="#c8c8c8" stroke-width="1.1"/></svg>
<svg style="left:1015.2px;top:397.0px;" width="10" height="10" viewBox="0 0 10 10"><path d="M2.600 1.400v7.200L8.400 5z" fill="#c8c8c8"/></svg>
<svg style="left:1032.9px;top:397.0px;" width="10" height="10" viewBox="0 0 10 10"><path d="M4 2.200v5.600L8.400 5z" fill="#c8c8c8"/><path d="M2.200 2.200v5.600" stroke="#c8c8c8" stroke-width="1.1"/></svg>
<svg style="left:1049.8px;top:397.0px;" width="10" height="10" viewBox="0 0 10 10"><path d="M8.400 1.600v6.800" stroke="#c8c8c8" stroke-width="0.9"/><path d="M7.400 5h-6M4.800 2.800L7.200 5 4.800 7.200" fill="none" stroke="#c8c8c8" stroke-width="1"/></svg>
<svg style="left:1071.4px;top:397.0px;" width="10" height="10" viewBox="0 0 10 10"><rect x="0.600" y="4.600" width="3.800" height="3.600" fill="#c8c8c8"/><rect x="5.800" y="4.800" width="3.400" height="3.200" fill="none" stroke="#c8c8c8" stroke-width="0.9"/><path d="M2.600 3.800V1.800h4.800v2.400" fill="none" stroke="#c8c8c8" stroke-width="0.9"/></svg>
<svg style="left:1088.3px;top:397.0px;" width="10" height="10" viewBox="0 0 10 10"><rect x="0.600" y="4.800" width="3" height="3.200" fill="none" stroke="#c8c8c8" stroke-width="0.9"/><rect x="6.200" y="4.600" width="3.200" height="3.600" fill="#c8c8c8"/><path d="M2.200 3.800V1.800h5.600v2.400M5 1.800v6.600" fill="none" stroke="#c8c8c8" stroke-width="0.9"/></svg>
<svg style="left:1106.3px;top:397.0px;" width="10" height="10" viewBox="0 0 10 10"><path d="M0.800 3h2l0.800-1.200h2.800L7.200 3h2v5.400H0.800z" fill="#c8c8c8"/><circle cx="5" cy="5.600" r="1.500" fill="#222"/></svg>
<svg style="left:1122.8px;top:397.0px;" width="10" height="10" viewBox="0 0 10 10"><rect x="0.800" y="1.400" width="5.400" height="4.400" fill="#c8c8c8"/><rect x="4" y="4.400" width="5.200" height="4.200" fill="#222" stroke="#c8c8c8" stroke-width="0.9"/></svg>
<svg style="left:1140.5px;top:397.0px;" width="10" height="10" viewBox="0 0 10 10"><rect x="0.600" y="1.600" width="4.600" height="3.800" fill="#c8c8c8"/><rect x="4" y="5" width="5" height="3.600" fill="#c8c8c8" opacity="0.7"/><path d="M6.600 1.600h2.400v2.400" fill="none" stroke="#c8c8c8" stroke-width="0.8"/></svg>
<svg style="left:1247.3px;top:396.7px;" width="10" height="10" viewBox="0 0 10 10"><path d="M5 2v6M2 5h6" stroke="#e0e0e0" stroke-width="1.250"/></svg>
<!-- video -->
<svg style="left:779px;top:76px;" width="482" height="271" viewBox="779 76 482 271"><defs>
<linearGradient id="vbg" x1="0.1" y1="0" x2="0.25" y2="1"><stop offset="0" stop-color="#ece8e9"/><stop offset="0.5" stop-color="#e2dddd"/><stop offset="1" stop-color="#d5cfd1"/></linearGradient>
<radialGradient id="vvig" cx="0.45" cy="0.35" r="0.85"><stop offset="0.6" stop-color="#000" stop-opacity="0"/><stop offset="1" stop-color="#201828" stop-opacity="0.05"/></radialGradient>
<linearGradient id="skin" x1="0.9" y1="0" x2="0.3" y2="1"><stop offset="0" stop-color="#eecbc0"/><stop offset="0.14" stop-color="#e0b09a"/><stop offset="0.45" stop-color="#d59c7c"/><stop offset="0.75" stop-color="#cc8f6c"/><stop offset="1" stop-color="#d29979"/></linearGradient>
<linearGradient id="thumb" x1="0.8" y1="0" x2="0.2" y2="1"><stop offset="0" stop-color="#ecc7b9"/><stop offset="0.3" stop-color="#dba68b"/><stop offset="1" stop-color="#cf9574"/></linearGradient>
<linearGradient id="hs" x1="0" y1="0" x2="0" y2="1"><stop offset="0" stop-color="#6a6864"/><stop offset="1" stop-color="#45433f"/></linearGradient>
<pattern id="fins" x="986.4" y="0" width="2.42" height="4" patternUnits="userSpaceOnUse"><rect width="1.05" height="4" fill="#1b1a1a" opacity="0.8"/></pattern>
<filter id="b1" x="-20%" y="-20%" width="140%" height="140%"><feGaussianBlur stdDeviation="0.85"/></filter>
<filter id="b2" x="-20%" y="-20%" width="140%" height="140%"><feGaussianBlur stdDeviation="0.9"/></filter>
<filter id="b05"><feGaussianBlur stdDeviation="0.45"/></filter>
<filter id="b3" x="-30%" y="-30%" width="160%" height="160%"><feGaussianBlur stdDeviation="2.6"/></filter>
<clipPath id="vclip"><rect x="779" y="76" width="482" height="271"/></clipPath>
</defs><g clip-path="url(#vclip)"><rect x="779" y="76" width="482" height="271" fill="url(#vbg)"/><rect x="779" y="76" width="482" height="271" fill="url(#vvig)"/><rect x="947" y="116" width="176" height="211" rx="10" fill="#8a8388" opacity="0.30" filter="url(#b3)"/><path d="M926 151.6 C929.5 150.5 931.5 152.5 931.6 156 C932.6 164 932.4 175 931.3 186 C930 197 928 206 926 213 C924 220 922 226 920 231.5 C918 240 916.5 247 915.4 252.6 C914.5 258 913.5 263 912.4 267.8 L915 262 C918 256 924 250 929 248 C933 246.3 938 247 941.5 251 C944.5 255 944.5 262 941.3 271 C939 279 936.5 286 933.7 292.200 C931.5 299 929 305 926 310.400 C923.5 316 920.5 321.5 917 325.700 C912 330.5 907 333 901.700 334.800 C896.5 337 892 339 886.500 340.900 C882 343 878 345 874.300 347.5 L790 349 L795.200 344.500 C803.500 339.500 811 334 818 328.700 C826 323 833.500 317 840 310.400 C845.500 303.500 850.500 296.500 854.500 289.100 C859 281 864 273 868.400 264.800 C872.700 257 876.800 248.500 880.700 240.400 C885.300 231.500 890.300 222 894.400 213 C898.200 206 901.500 199 904.600 191.700 C907.600 185.500 910.300 179.500 913 173.500 C915.300 168 917.500 162 919.800 156.700 C920.5 154 923 152.5 926 151.6 Z" fill="#dfb198" opacity="0.400" filter="url(#b3)" transform="translate(-2.500 1)"/><path d="M926 151.6 C929.5 150.5 931.5 152.5 931.6 156 C932.6 164 932.4 175 931.3 186 C930 197 928 206 926 213 C924 220 922 226 920 231.5 C918 240 916.5 247 915.4 252.6 C914.5 258 913.5 263 912.4 267.8 L915 262 C918 256 924 250 929 248 C933 246.3 938 247 941.5 251 C944.5 255 944.5 262 941.3 271 C939 279 936.5 286 933.7 292.200 C931.5 299 929 305 926 310.400 C923.5 316 920.5 321.5 917 325.700 C912 330.5 907 333 901.700 334.800 C896.5 337 892 339 886.500 340.900 C882 343 878 345 874.300 347.5 L790 349 L795.200 344.500 C803.500 339.500 811 334 818 328.700 C826 323 833.500 317 840 310.400 C845.500 303.500 850.500 296.500 854.500 289.100 C859 281 864 273 868.400 264.800 C872.700 257 876.800 248.500 880.700 240.400 C885.300 231.500 890.300 222 894.400 213 C898.200 206 901.500 199 904.600 191.700 C907.600 185.500 910.300 179.500 913 173.500 C915.300 168 917.500 162 919.800 156.700 C920.5 154 923 152.5 926 151.6 Z" fill="url(#skin)" filter="url(#b1)"/><path d="M913 268 C916 260 923 251 929 248 C933 246.300 938 247 941.500 251 C944.500 255 944.500 262 941.300 271 C939 279 936.500 286 933.700 292.200 C931 300 927 309 922 317 C918 311 914 300 912 290 C911 282 911.5 274 913 268 Z" fill="url(#thumb)" filter="url(#b1)"/><path d="M913.5 250 C912 262 911 272 908 283 C905 293 900 301 896 308" fill="none" stroke="#b97d5c" stroke-width="2.2" opacity="0.55" filter="url(#b2)"/><path d="M928 170 C926 190 921 212 915 232 C911 245 906 258 901 268" fill="none" stroke="#c68f70" stroke-width="1.6" opacity="0.55" filter="url(#b2)"/><ellipse cx="927.5" cy="158" rx="3.6" ry="6" fill="#f3d6cf" opacity="0.8" filter="url(#b2)" transform="rotate(12 927.5 158)"/><ellipse cx="929.500" cy="172" rx="2.600" ry="7" fill="#efd0c8" opacity="0.700" filter="url(#b2)" transform="rotate(6 929.500 172)"/><ellipse cx="936" cy="255" rx="6" ry="6.5" fill="#efd0c6" opacity="0.75" filter="url(#b2)"/><path d="M918 160 C905 188 890 218 875 248 C862 274 846 302 822 326" fill="none" stroke="#e4bda6" stroke-width="2" opacity="0.350" filter="url(#b1)" transform="translate(6 1)"/><g transform="rotate(0.9 1034 220)"><path d="M956.800 116.400H1111.600a8 8 0 0 1 8 8L1118.200 315a7.500 7.500 0 0 1-7.500 7.500H956.500a7.500 7.500 0 0 1-7.500-7.500L948.800 124.400a8 8 0 0 1 8-8z" fill="#3b3e47"/><path d="M956.800 116.400H1111.600a8 8 0 0 1 8 8" fill="none" stroke="#5a5e6a" stroke-width="0.900" opacity="0.800"/><path d="M958.500 120.400H1110a5.500 5.500 0 0 1 5.500 5.500L1114.500 268H953L953 125.900a5.500 5.500 0 0 1 5.500-5.500z" fill="#0e0e11"/><path d="M953 272h16.500v27.500H957c-2.500 0-4-2-4-4z" fill="#0b0b0e"/><path d="M969.500 268h128v44.500l-128-1.300z" fill="#0c0c0f"/><path d="M1097.500 272h17v38c0 4-3 7-7 8h-10z" fill="#0d0d11"/><path d="M949.500 268h19.500v4h-19.500zM1097 268h21v4h-21z" fill="#464a55"/><path d="M965.800 261h2.600v9h-2.600zM1096.800 261h2.600v9h-2.600z" fill="#3f434d"/><path d="M952 313c1.500 5 4 7.500 8 8h148c4-0.500 6.500-3 8-8l-7 4H959z" fill="#4a4e5a"/><path d="M969.500 311.200l128 1.300" stroke="#50545f" stroke-width="0.900"/><rect x="968" y="134.500" width="129" height="134" fill="#09090c" stroke="#2a2b33" stroke-width="1"/><path d="M968 167.5h129" stroke="#2a2b33" stroke-width="1.1"/><path d="M968 168.8h129" stroke="#050507" stroke-width="1.2"/><path d="M968 201h129" stroke="#2a2b33" stroke-width="1.1"/><path d="M968 202.3h129" stroke="#050507" stroke-width="1.2"/><path d="M968 234.5h129" stroke="#2a2b33" stroke-width="1.1"/><path d="M968 235.8h129" stroke="#050507" stroke-width="1.2"/><g opacity="0.9"><rect x="1010" y="152.5" width="58" height="14.500" fill="#121317" stroke="#22232a" stroke-width="0.8"/><rect x="1012" y="154" width="24" height="11.500" fill="#030304"/><rect x="1044" y="154" width="22" height="11.500" fill="#030304"/><rect x="992" y="157" width="9" height="8.500" fill="#040405" stroke="#1c1d24" stroke-width="0.6"/><path d="M1000 141.5h14" stroke="#30323a" stroke-width="0.8" opacity="0.7"/><rect x="1076" y="146" width="8" height="20" fill="#101116"/></g><g opacity="0.9"><rect x="1010" y="186.5" width="58" height="14.500" fill="#121317" stroke="#22232a" stroke-width="0.8"/><rect x="1012" y="188" width="24" height="11.500" fill="#030304"/><rect x="1044" y="188" width="22" height="11.500" fill="#030304"/><rect x="992" y="191" width="9" height="8.500" fill="#040405" stroke="#1c1d24" stroke-width="0.6"/><path d="M1000 175.5h14" stroke="#30323a" stroke-width="0.8" opacity="0.7"/><rect x="1076" y="180" width="8" height="20" fill="#101116"/></g><g opacity="0.9"><rect x="1010" y="220.0" width="58" height="14.500" fill="#121317" stroke="#22232a" stroke-width="0.8"/><rect x="1012" y="221.5" width="24" height="11.500" fill="#030304"/><rect x="1044" y="221.5" width="22" height="11.500" fill="#030304"/><rect x="992" y="224.5" width="9" height="8.500" fill="#040405" stroke="#1c1d24" stroke-width="0.6"/><path d="M1000 209.0h14" stroke="#30323a" stroke-width="0.8" opacity="0.7"/><rect x="1076" y="213.5" width="8" height="20" fill="#101116"/></g><g opacity="0.5"><rect x="1010" y="252.5" width="58" height="14.500" fill="#121317" stroke="#22232a" stroke-width="0.8"/><rect x="1012" y="254" width="24" height="11.500" fill="#030304"/><rect x="1044" y="254" width="22" height="11.500" fill="#030304"/><rect x="992" y="257" width="9" height="8.500" fill="#040405" stroke="#1c1d24" stroke-width="0.6"/><path d="M1000 241.5h14" stroke="#30323a" stroke-width="0.8" opacity="0.7"/><rect x="1076" y="246" width="8" height="20" fill="#101116"/></g><path d="M956.0999999999999 167.3h6.400" stroke="#5a5e6c" stroke-width="1.2" opacity="0.8"/><circle cx="959.3" cy="167.3" r="2.300" fill="#6b6e78"/><circle cx="959.3" cy="167.3" r="1.100" fill="#15161a"/><path d="M955.5 217.6h6.400" stroke="#5a5e6c" stroke-width="1.2" opacity="0.8"/><circle cx="958.7" cy="217.6" r="2.300" fill="#6b6e78"/><circle cx="958.7" cy="217.6" r="1.100" fill="#15161a"/><path d="M1105.1 167.2h6.400" stroke="#5a5e6c" stroke-width="1.2" opacity="0.8"/><circle cx="1108.3" cy="167.2" r="2.300" fill="#6b6e78"/><circle cx="1108.3" cy="167.2" r="1.100" fill="#15161a"/><path d="M1104.3999999999999 218.6h6.400" stroke="#5a5e6c" stroke-width="1.2" opacity="0.8"/><circle cx="1107.6" cy="218.6" r="2.300" fill="#6b6e78"/><circle cx="1107.6" cy="218.6" r="1.100" fill="#15161a"/><path d="M981 270v28M1069 270v28" stroke="#1c1d23" stroke-width="1.200"/><rect x="986.400" y="273.700" width="81" height="19.500" fill="url(#hs)"/><rect x="986.400" y="273.700" width="81" height="19.500" fill="url(#fins)"/><rect x="1059.500" y="273.700" width="7.900" height="19.500" fill="#2a2928" opacity="0.75"/><rect x="987" y="293" width="72.500" height="3.200" fill="#b4b0a9"/><rect x="1062" y="292.500" width="5" height="1.600" fill="#bdb9b2"/><rect x="958.500" y="273" width="4" height="24" fill="#24252b"/><rect x="960" y="278.500" width="16.500" height="10" fill="#8e8a84"/><rect x="962.500" y="281" width="10" height="5" fill="#5c5955"/><rect x="960" y="278.500" width="16.500" height="1.400" fill="#bdb9b2"/><rect x="961" y="289.800" width="12" height="7" fill="#a09c95"/><rect x="963" y="292" width="7.500" height="3.200" fill="#4a4845"/><rect x="957.500" y="276" width="2.400" height="11" fill="#c9c5be"/><rect x="1072" y="275" width="14" height="9" fill="#17171b"/><rect x="1074" y="276" width="5" height="4" fill="#2b2a28"/><rect x="1072.500" y="290" width="5" height="6" fill="#222226"/><path d="M958.500 297.600h121v1.700h-121z" fill="#70773f"/><rect x="1009" y="296.200" width="4" height="1.600" fill="#d8d5cf"/><rect x="1019" y="296.200" width="4" height="1.600" fill="#d8d5cf"/><rect x="1029" y="296.200" width="4" height="1.600" fill="#d8d5cf"/><path d="M983 300.400h94.500l3.400 9.800-101.500-0.800z" fill="#dad5d6"/><path d="M1093.800 289.500l3.600 0.600 1 24.500-3.400 0.600z" fill="#7c8450"/><rect x="1094" y="288" width="2" height="8" fill="#c8c4bd" opacity="0.7"/><rect x="1098.800" y="307.600" width="6.600" height="7.400" fill="#cbc7c3"/><circle cx="1102" cy="311.300" r="1.500" fill="#9a958f"/><circle cx="959.500" cy="305" r="2.200" fill="#1f2026"/><circle cx="959.500" cy="305" r="3.400" fill="none" stroke="#2f323a" stroke-width="0.800"/><rect x="971.500" y="322.600" width="3.600" height="1.800" rx="0.8" fill="#2f3138"/><rect x="1085" y="322.800" width="3.600" height="1.800" rx="0.8" fill="#2a2c34"/></g></g></svg>
<!-- project -->
<span class="t" style="left:281.5px;top:418px;font-size:6.2px;line-height:6.2px;color:#bbb;transform:translateY(0.06px) rotate(0.01deg);"><svg class="ci" width="12.80" height="6.40" viewBox="0 0 20 10" style="opacity:0.78"><g fill="none" stroke="#ddd" stroke-width="1.05"><path transform="translate(0.4,0) scale(0.92,1)" d="M0.8 1.6h8.4M2.6 1.6v3.4h5V1.6M1 7h8M5 5v4.4M2 9l1.6-2M8 9L6.4 7"/><path transform="translate(10.4,0) scale(0.92,1)" d="M1.5 2h7v6.5h-7zM5 2v6.5M1.5 5.2h7"/></g></svg>: <svg class="ci" width="19.20" height="6.40" viewBox="0 0 30 10" style="opacity:0.78"><g fill="none" stroke="#ddd" stroke-width="1.05"><path transform="translate(0.4,0) scale(0.92,1)" d="M3 0.8L1 4.4M2.2 3v6.4M4.4 2.6h5M4 5.6h5.6M6.8 0.8v8.6"/><path transform="translate(10.4,0) scale(0.92,1)" d="M1 2.2h8M1 5h8M0.6 8.6h8.8M5 2.2v6.4M3 0.6l-1 1.6M7 0.6l1 1.6"/><path transform="translate(20.4,0) scale(0.92,1)" d="M2.2 0.8v8.6M0.6 3.4l1.6-1M4.2 1.6h5M4.2 4h5M4.2 6.4h5.2M6.6 1.6v7.6"/></g></svg></span>
<div style="left:320.5px;top:419px;width:4.6px;height:1px;background:#c4c4c4;"></div>
<div style="left:320.5px;top:422px;width:4.6px;height:1px;background:#c4c4c4;"></div>
<div style="left:281px;top:425.7px;width:46px;height:1.1px;background:#d4d4d4;"></div>
<span class="t" style="left:338.4px;top:418.10px;font-size:6.6px;line-height:6.6px;height:6.6px"><svg class="ci" width="33.00" height="6.60" viewBox="0 0 50 10" style="opacity:0.65"><g fill="none" stroke="#aaa" stroke-width="1.1"><path transform="translate(0.4,0) scale(0.92,1)" d="M5 0.6v1.4M1 2.6h8M2.4 4l5.4 5M7.6 4L2.2 9"/><path transform="translate(10.4,0) scale(0.92,1)" d="M1 1.4h3.4M2.6 1.4v7.6M1 5h3M5.4 0.8v8.4M5.4 2h4v2.6h-4M5.4 6.4h4M9.2 6.4v2.8"/><path transform="translate(20.4,0) scale(0.92,1)" d="M1 1.4h8v7.4H1zM3 3.4h4M3 5.2h4M3 7h4"/><path transform="translate(30.4,0) scale(0.92,1)" d="M1 3h8M5 0.8v8.6M4.6 3.4L1 8M5.4 3.4L9 8"/><path transform="translate(40.4,0) scale(0.92,1)" d="M1 1.6l2 1.4-2 2h2.4M1 7.6l2.2-1M4.6 1.4h4.6v2.4H4.6zM4.6 5h4.8v4M4.6 5v4.2M6.2 5v4M7.8 5v4M4.6 7h4.8"/></g></svg></span>
<svg style="left:282px;top:432.5px;" width="9" height="7" viewBox="0 0 9 7"><path d="M0.300 0.600h3l0.800 1h4.400v4.800H0.300z" fill="#4a4a4a"/></svg>
<span class="t" style="left:297px;top:434px;font-size:5.6px;line-height:5.6px;color:#8a8a8a;transform:translateY(0.02px) rotate(0.01deg);"><svg class="ci" width="18.00" height="6.00" viewBox="0 0 30 10" style="opacity:0.75"><g fill="none" stroke="#999" stroke-width="1.1"><path transform="translate(0.4,0) scale(0.92,1)" d="M0.8 1.6h8.4M2.6 1.6v3.4h5V1.6M1 7h8M5 5v4.4M2 9l1.6-2M8 9L6.4 7"/><path transform="translate(10.4,0) scale(0.92,1)" d="M1.5 2h7v6.5h-7zM5 2v6.5M1.5 5.2h7"/><path transform="translate(20.4,0) scale(0.92,1)" d="M3 0.8L1 4.4M2.2 3v6.4M4.4 2.6h5M4 5.6h5.6M6.8 0.8v8.6"/></g></svg>.prproj</span>
<div style="left:282px;top:444.2px;width:98.5px;height:9px;background:#161616;border-radius:1px"></div>
<svg style="left:284.5px;top:445.5px;" width="7" height="7" viewBox="0 0 7 7"><circle cx="4" cy="2.800" r="1.900" fill="none" stroke="#ccc" stroke-width="0.800"/><path d="M2.700 4.300L0.800 6.300" stroke="#ccc" stroke-width="0.900"/></svg>
<svg style="left:389.5px;top:444.5px;" width="9" height="8" viewBox="0 0 9 8"><path d="M0.500 0.800h2.800l0.800 1h4v5H0.500z" fill="#b5b5b5"/><circle cx="4.600" cy="4.200" r="1.100" fill="none" stroke="#333" stroke-width="0.600"/></svg>
<span class="t" style="left:440px;top:446px;font-size:6.2px;line-height:6.2px;color:#808080;transform:translateY(0.26px) rotate(0.01deg);">1 <svg class="ci" width="26.40" height="6.60" viewBox="0 0 40 10" style="opacity:0.8"><g fill="none" stroke="#888" stroke-width="1.05"><path transform="translate(0.4,0) scale(0.92,1)" d="M1 2.2h8M1 5h8M0.6 8.6h8.8M5 2.2v6.4M3 0.6l-1 1.6M7 0.6l1 1.6"/><path transform="translate(10.4,0) scale(0.92,1)" d="M2.2 0.8v8.6M0.6 3.4l1.6-1M4.2 1.6h5M4.2 4h5M4.2 6.4h5.2M6.6 1.6v7.6"/><path transform="translate(20.4,0) scale(0.92,1)" d="M5 0.6v1.4M1 2.6h8M2.4 4l5.4 5M7.6 4L2.2 9"/><path transform="translate(30.4,0) scale(0.92,1)" d="M1 1.4h3.4M2.6 1.4v7.6M1 5h3M5.4 0.8v8.4M5.4 2h4v2.6h-4M5.4 6.4h4M9.2 6.4v2.8"/></g></svg>, <svg class="ci" width="6.60" height="6.60" viewBox="0 0 10 10" style="opacity:0.8"><g fill="none" stroke="#888" stroke-width="1.05"><path transform="translate(0.4,0) scale(0.92,1)" d="M1 1.4h8v7.4H1zM3 3.4h4M3 5.2h4M3 7h4"/></g></svg> 13 <svg class="ci" width="6.60" height="6.60" viewBox="0 0 10 10" style="opacity:0.8"><g fill="none" stroke="#888" stroke-width="1.05"><path transform="translate(0.4,0) scale(0.92,1)" d="M1 3h8M5 0.8v8.6M4.6 3.4L1 8M5.4 3.4L9 8"/></g></svg></span>
<div style="left:282px;top:458.6px;width:216px;height:0.8px;background:#2c2c2c;"></div>
<div style="left:493.8px;top:460px;width:4.4px;height:197px;background:#1d1d1d;"></div>
<div style="left:494.2px;top:460px;width:3.6px;height:141px;background:#3c3c3c;border-radius:1.500px"></div>
<svg style="left:0px;top:0px;" width="1268" height="690" viewBox="0 0 1268 690"><defs><linearGradient id="tbg" x1="0" y1="0" x2="1" y2="0.600"><stop offset="0" stop-color="#f9f7f9"/><stop offset="1" stop-color="#efecef"/></linearGradient><clipPath id="tclip"><rect x="282" y="459" width="216" height="198.200"/></clipPath><filter id="tb"><feGaussianBlur stdDeviation="0.500"/></filter></defs><g clip-path="url(#tclip)"><rect x="282.800" y="459.700" width="69.400" height="54.200" fill="#8a8a8a"/><svg x="287.7" y="463.7" width="59.6" height="35.3" viewBox="0 0 59.6 35.3" overflow="hidden"><rect width="59.6" height="35.3" fill="url(#tbg)"/><g filter="url(#tb)"><path d="M2 36C6 31 10 25 13 19c2-4 4-7.500 6-9.500 1.200-0.300 1.600 0.800 1.400 2.500-0.400 3.500-0.800 6-1.400 8.500 0.800-1 2-1.600 2.800-1 0.800 1.200-0.400 4-2 6.500-1.800 3-4 6-7.500 9.500z" fill="#dba689"/><rect x="21" y="5" width="21" height="26.5" rx="1.5" fill="#111115" /><rect x="25" y="27.500" width="13" height="1.300" fill="#bbb7b3"/></g></svg><svg x="356.8" y="463.7" width="61.5" height="35.3" viewBox="0 0 61.5 35.3" overflow="hidden"><rect width="61.5" height="35.3" fill="url(#tbg)"/><g filter="url(#tb)"><rect x="13.7" y="10" width="26.5" height="18.5" rx="1.5" fill="#111115" /><rect x="16" y="12" width="22" height="12" fill="#08080a"/><path d="M16 16h22M16 20h22" stroke="#2a2b33" stroke-width="0.600"/><rect x="18" y="26.500" width="14" height="2" fill="#8a867f"/></g></svg><svg x="427.6" y="463.7" width="61.5" height="35.3" viewBox="0 0 61.5 35.3" overflow="hidden"><rect width="61.5" height="35.3" fill="url(#tbg)"/><g filter="url(#tb)"><rect x="22.4" y="8.1" width="18.7" height="21" rx="1.5" fill="#111115" /><path d="M24 13h15M24 17.500h15M24 22h15" stroke="#2f3038" stroke-width="0.700"/><rect x="26" y="25" width="9" height="2.500" fill="#77736d"/><path d="M38 0.500l20 0.500-0.500 2-19-0.500z" fill="#33343a"/><rect x="56" y="0" width="4" height="3" fill="#1c1d22"/><rect x="40" y="12" width="3" height="10" fill="#1d1e24"/></g></svg><svg x="287.7" y="518.7" width="59.6" height="35.3" viewBox="0 0 59.6 35.3" overflow="hidden"><rect width="59.6" height="35.3" fill="url(#tbg)"/><g filter="url(#tb)"><rect x="19.5" y="7" width="16.5" height="21" rx="1.5" fill="#111115" /><path d="M21 11.500h13.500M21 16h13.500M21 20.500h13.500" stroke="#2f3038" stroke-width="0.700"/><rect x="24" y="24.500" width="7" height="2.200" fill="#c9c5c0"/><path d="M33 1.800l18 0.700-0.200 1.600-18-0.700z" fill="#3a3b42"/><rect x="36" y="10" width="2.600" height="11" fill="#24252b"/></g></svg><svg x="356.8" y="518.7" width="61.5" height="35.3" viewBox="0 0 61.5 35.3" overflow="hidden"><rect width="61.5" height="35.3" fill="url(#tbg)"/><g filter="url(#tb)"><g transform="rotate(-17 35.700 18.700)"><rect x="22" y="10" width="28" height="17.5" rx="1.5" fill="#15161a" /><rect x="25" y="12" width="9" height="6" fill="#2b2c33"/><rect x="37" y="13" width="8" height="9" fill="#07070a"/><path d="M24 21h22M24 24h20" stroke="#3b3c44" stroke-width="0.800"/><rect x="23" y="26" width="26" height="1.200" fill="#5d6038"/></g><path d="M26 34l2 3" stroke="#6b7340" stroke-width="0.800"/></g></svg><svg x="427.6" y="518.7" width="61.5" height="35.3" viewBox="0 0 61.5 35.3" overflow="hidden"><rect width="61.5" height="35.3" fill="url(#tbg)"/><g filter="url(#tb)"><rect x="23.9" y="12.7" width="15.5" height="13.3" rx="0.8" fill="#26272c" /><rect x="26" y="15" width="5" height="5" fill="#0b0b0e"/><rect x="33" y="14.500" width="4" height="3" fill="#6a6c72"/><rect x="33" y="20" width="4.500" height="3.500" fill="#888a90"/><rect x="26" y="22.500" width="5" height="2" fill="#a5a29c"/><circle cx="5" cy="6" r="0.500" fill="#444"/><circle cx="8" cy="3" r="0.400" fill="#555"/></g></svg><svg x="287.7" y="573.8" width="59.6" height="35.3" viewBox="0 0 59.6 35.3" overflow="hidden"><rect width="59.6" height="35.3" fill="url(#tbg)"/><g filter="url(#tb)"><path d="M16 6l27.500 3.200-2 22.500-26.500-4.500z" fill="#787c89"/><path d="M16 6l27.500 3.200-0.300 2.500-27.500-3.200z" fill="#8a8e9c"/><path d="M20 24l18 2.500-0.300 3-18-2.800z" fill="#c9c6c8"/><path d="M21.500 25.500l15 2" stroke="#3a3b42" stroke-width="1.600" stroke-dasharray="2.200 1"/><path d="M43 26.500c4-1.500 9-1.800 17-1v6H44z" fill="#e3b69b"/><path d="M0 33.500c3-0.800 6-0.800 9 0v2H0z" fill="#ead0c4" opacity="0.700"/></g></svg><svg x="356.8" y="573.8" width="61.5" height="35.3" viewBox="0 0 61.5 35.3" overflow="hidden"><rect width="61.5" height="35.3" fill="url(#tbg)"/><g filter="url(#tb)"><rect x="22.1" y="5" width="21.4" height="26.5" rx="1.2" fill="#0f0f13" /><rect x="24.500" y="7.500" width="16.500" height="16.500" fill="#060608" stroke="#2a2b33" stroke-width="0.600"/><rect x="26" y="26.500" width="11" height="1.500" fill="#7d7974"/><rect x="37.800" y="25.600" width="3.800" height="2.300" fill="#d8432f"/><rect x="43.600" y="6" width="1.500" height="24" fill="#2c2e38"/></g></svg><svg x="427.6" y="573.8" width="61.5" height="35.3" viewBox="0 0 61.5 35.3" overflow="hidden"><rect width="61.5" height="35.3" fill="url(#tbg)"/><g filter="url(#tb)"><rect x="21.2" y="5.6" width="21.7" height="25.8" rx="1.5" fill="#17181c" /><circle cx="32.05" cy="16.951999999999998" r="8.68" fill="#0a0a0c" stroke="#3a3c44" stroke-width="0.7"/><path d="M32.0 17.0L39.9 17.0" stroke="#34363e" stroke-width="1.100"/><path d="M32.0 17.0L36.9 23.1" stroke="#34363e" stroke-width="1.100"/><path d="M32.0 17.0L30.3 24.6" stroke="#34363e" stroke-width="1.100"/><path d="M32.0 17.0L25.0 20.3" stroke="#34363e" stroke-width="1.100"/><path d="M32.0 17.0L25.0 13.6" stroke="#34363e" stroke-width="1.100"/><path d="M32.0 17.0L30.3 9.3" stroke="#34363e" stroke-width="1.100"/><path d="M32.0 17.0L36.9 10.8" stroke="#34363e" stroke-width="1.100"/><circle cx="32.05" cy="16.951999999999998" r="2.4304" fill="#2a2c33"/><rect x="23.2" y="27.799999999999997" width="17.7" height="1.300" fill="#c8c4c0"/></g></svg><svg x="287.7" y="628.8" width="59.6" height="35.3" viewBox="0 0 59.6 35.3" overflow="hidden"><rect width="59.6" height="35.3" fill="url(#tbg)"/><g filter="url(#tb)"><rect x="20.3" y="5.8" width="20.5" height="25" rx="1.5" fill="#17181c" /><circle cx="30.55" cy="16.8" r="8.200000000000001" fill="#0a0a0c" stroke="#3a3c44" stroke-width="0.7"/><path d="M30.6 16.8L37.9 16.8" stroke="#34363e" stroke-width="1.100"/><path d="M30.6 16.8L35.2 22.6" stroke="#34363e" stroke-width="1.100"/><path d="M30.6 16.8L28.9 24.0" stroke="#34363e" stroke-width="1.100"/><path d="M30.6 16.8L23.9 20.0" stroke="#34363e" stroke-width="1.100"/><path d="M30.6 16.8L23.9 13.6" stroke="#34363e" stroke-width="1.100"/><path d="M30.6 16.8L28.9 9.6" stroke="#34363e" stroke-width="1.100"/><path d="M30.6 16.8L35.2 11.0" stroke="#34363e" stroke-width="1.100"/><circle cx="30.55" cy="16.8" r="2.2960000000000007" fill="#2a2c33"/><rect x="22.3" y="27.2" width="16.5" height="1.300" fill="#c8c4c0"/></g></svg><svg x="356.8" y="628.8" width="61.5" height="35.3" viewBox="0 0 61.5 35.3" overflow="hidden"><rect width="61.5" height="35.3" fill="url(#tbg)"/><g filter="url(#tb)"><rect x="18.1" y="7.2" width="22" height="24" rx="1.5" fill="#17181c" /><circle cx="29.1" cy="17.76" r="8.8" fill="#0a0a0c" stroke="#3a3c44" stroke-width="0.7"/><path d="M29.1 17.8L37.0 17.8" stroke="#34363e" stroke-width="1.100"/><path d="M29.1 17.8L34.0 24.0" stroke="#34363e" stroke-width="1.100"/><path d="M29.1 17.8L27.3 25.5" stroke="#34363e" stroke-width="1.100"/><path d="M29.1 17.8L22.0 21.2" stroke="#34363e" stroke-width="1.100"/><path d="M29.1 17.8L22.0 14.3" stroke="#34363e" stroke-width="1.100"/><path d="M29.1 17.8L27.3 10.0" stroke="#34363e" stroke-width="1.100"/><path d="M29.1 17.8L34.0 11.6" stroke="#34363e" stroke-width="1.100"/><circle cx="29.1" cy="17.76" r="2.4640000000000004" fill="#2a2c33"/><rect x="20.1" y="27.599999999999998" width="18" height="1.300" fill="#c8c4c0"/><rect x="40.100" y="7.200" width="3.800" height="24" fill="#1d1e24"/></g></svg><svg x="427.6" y="628.8" width="61.5" height="35.3" viewBox="0 0 61.5 35.3" overflow="hidden"><rect width="61.5" height="35.3" fill="url(#tbg)"/><g filter="url(#tb)"><rect x="22.400" y="6.200" width="21" height="26" rx="1" fill="#16171b"/><rect x="23.600" y="7.400" width="18.600" height="20" fill="#6d717d"/></g></svg><rect x="330.7" y="491" width="8.0" height="8" fill="#2a78cc"/><path d="M332.09999999999997 495.0h5.1000000000000005" stroke="#9cc8f5" stroke-width="1.300" stroke-dasharray="1.300 0.700"/><rect x="339.0" y="491" width="8.0" height="8" fill="#2a78cc"/><path d="M340.4 495.0h5.1000000000000005" stroke="#9cc8f5" stroke-width="1.300" stroke-dasharray="1.300 0.700"/><path d="M344.7 492.6v4.8" stroke="#cfe4fa" stroke-width="0.7"/><rect x="410.2" y="491" width="8.2" height="8" fill="#6e6e6e"/><rect x="411.8" y="493" width="4.999999999999999" height="4" fill="none" stroke="#bdbdbd" stroke-width="0.7"/><path d="M414.3 492.6v4.8" stroke="#c8c8c8" stroke-width="0.8"/><rect x="481" y="491" width="8.2" height="8" fill="#6e6e6e"/><rect x="482.6" y="493" width="4.999999999999999" height="4" fill="none" stroke="#bdbdbd" stroke-width="0.7"/><path d="M485.1 492.6v4.8" stroke="#c8c8c8" stroke-width="0.8"/><rect x="338" y="546" width="9.3" height="8" fill="#6e6e6e"/><rect x="339.6" y="548" width="6.1000000000000005" height="4" fill="none" stroke="#bdbdbd" stroke-width="0.7"/><path d="M342.65 547.6v4.8" stroke="#c8c8c8" stroke-width="0.8"/><rect x="410.2" y="546" width="8.2" height="8" fill="#6e6e6e"/><rect x="411.8" y="548" width="4.999999999999999" height="4" fill="none" stroke="#bdbdbd" stroke-width="0.7"/><path d="M414.3 547.6v4.8" stroke="#c8c8c8" stroke-width="0.8"/><rect x="481" y="546" width="8.2" height="8" fill="#6e6e6e"/><rect x="482.6" y="548" width="4.999999999999999" height="4" fill="none" stroke="#bdbdbd" stroke-width="0.7"/><path d="M485.1 547.6v4.8" stroke="#c8c8c8" stroke-width="0.8"/><rect x="330.7" y="601.1" width="8.0" height="8" fill="#2a78cc"/><path d="M332.09999999999997 605.1h5.1000000000000005" stroke="#9cc8f5" stroke-width="1.300" stroke-dasharray="1.300 0.700"/><rect x="339.0" y="601.1" width="8.0" height="8" fill="#2a78cc"/><path d="M340.4 605.1h5.1000000000000005" stroke="#9cc8f5" stroke-width="1.300" stroke-dasharray="1.300 0.700"/><path d="M344.7 602.7v4.8" stroke="#cfe4fa" stroke-width="0.7"/><rect x="401.9" y="601.1" width="16.5" height="8" fill="#2d5f96"/><path d="M403.29999999999995 605.1h8.6" stroke="#4aa3f7" stroke-width="1.800" stroke-dasharray="1.400 0.600"/><path d="M412.8 602.3000000000001v5.6" stroke="#4aa3f7" stroke-width="0.800"/><path d="M414.1 605.1h2.0M416.6 602.9v4.4" stroke="#4aa3f7" stroke-width="1.100"/><rect x="472.6" y="601.1" width="16.6" height="8" fill="#2d5f96"/><path d="M474.0 605.1h8.6" stroke="#4aa3f7" stroke-width="1.800" stroke-dasharray="1.400 0.600"/><path d="M483.6 602.3000000000001v5.6" stroke="#4aa3f7" stroke-width="0.800"/><path d="M484.9 605.1h2.0M487.4 602.9v4.4" stroke="#4aa3f7" stroke-width="1.100"/></g></svg>
<span class="t" style="left:287.2px;top:505px;font-size:4.5px;line-height:4.5px;color:#1c1c1c;transform:translateY(0.66px) rotate(0.01deg) scaleY(1.15);;transform-origin:50% 0.94px">C0212.MP4</span>
<span class="t" style="right:920.7px;top:505px;font-size:4.5px;line-height:4.5px;color:#1c1c1c;transform:translateY(0.66px) rotate(0.01deg) scaleY(1.15);;transform-origin:50% 0.94px">1:09:20</span>
<span class="t" style="left:356.8px;top:505px;font-size:4.5px;line-height:4.5px;color:#808080;transform:translateY(0.66px) rotate(0.01deg) scaleY(1.15);;transform-origin:50% 0.94px">C0211.MP4</span>
<span class="t" style="right:849.6px;top:505px;font-size:4.5px;line-height:4.5px;color:#808080;transform:translateY(0.66px) rotate(0.01deg) scaleY(1.15);;transform-origin:50% 0.94px">2:35:03</span>
<span class="t" style="left:427.6px;top:505px;font-size:4.5px;line-height:4.5px;color:#808080;transform:translateY(0.66px) rotate(0.01deg) scaleY(1.15);;transform-origin:50% 0.94px">C0210.MP4</span>
<span class="t" style="right:778.8px;top:505px;font-size:4.5px;line-height:4.5px;color:#808080;transform:translateY(0.66px) rotate(0.01deg) scaleY(1.15);;transform-origin:50% 0.94px">2:40:40</span>
<span class="t" style="left:287.2px;top:560px;font-size:4.5px;line-height:4.5px;color:#808080;transform:translateY(0.46px) rotate(0.01deg) scaleY(1.15);;transform-origin:50% 0.94px">C0209.MP4</span>
<span class="t" style="right:920.7px;top:560px;font-size:4.5px;line-height:4.5px;color:#808080;transform:translateY(0.46px) rotate(0.01deg) scaleY(1.15);;transform-origin:50% 0.94px">3:32</span>
<span class="t" style="left:356.8px;top:560px;font-size:4.5px;line-height:4.5px;color:#808080;transform:translateY(0.46px) rotate(0.01deg) scaleY(1.15);;transform-origin:50% 0.94px">C0207.MP4</span>
<span class="t" style="right:849.6px;top:560px;font-size:4.5px;line-height:4.5px;color:#808080;transform:translateY(0.46px) rotate(0.01deg) scaleY(1.15);;transform-origin:50% 0.94px">4:32:03</span>
<span class="t" style="left:427.6px;top:560px;font-size:4.5px;line-height:4.5px;color:#808080;transform:translateY(0.46px) rotate(0.01deg) scaleY(1.15);;transform-origin:50% 0.94px">C0206.MP4</span>
<span class="t" style="right:778.8px;top:560px;font-size:4.5px;line-height:4.5px;color:#808080;transform:translateY(0.46px) rotate(0.01deg) scaleY(1.15);;transform-origin:50% 0.94px">4:00:48</span>
<span class="t" style="left:287.2px;top:615px;font-size:4.5px;line-height:4.5px;color:#808080;transform:translateY(0.46px) rotate(0.01deg) scaleY(1.15);;transform-origin:50% 0.94px">C0205.MP4</span>
<span class="t" style="right:920.7px;top:615px;font-size:4.5px;line-height:4.5px;color:#808080;transform:translateY(0.46px) rotate(0.01deg) scaleY(1.15);;transform-origin:50% 0.94px">1:45:41</span>
<span class="t" style="left:356.8px;top:615px;font-size:4.5px;line-height:4.5px;color:#808080;transform:translateY(0.46px) rotate(0.01deg) scaleY(1.15);;transform-origin:50% 0.94px">C0203.MP4</span>
<span class="t" style="right:849.6px;top:615px;font-size:4.5px;line-height:4.5px;color:#808080;transform:translateY(0.46px) rotate(0.01deg) scaleY(1.15);;transform-origin:50% 0.94px">27:18</span>
<span class="t" style="left:427.6px;top:615px;font-size:4.5px;line-height:4.5px;color:#808080;transform:translateY(0.46px) rotate(0.01deg) scaleY(1.15);;transform-origin:50% 0.94px">C0201.MP4</span>
<span class="t" style="right:778.8px;top:615px;font-size:4.5px;line-height:4.5px;color:#808080;transform:translateY(0.46px) rotate(0.01deg) scaleY(1.15);;transform-origin:50% 0.94px">17:58</span>
<svg style="left:281px;top:665px;" width="10" height="10" viewBox="0 0 10 10"><path d="M2.200 6.800l4.300-4.300 1.900 1.900-4.300 4.300z" fill="#1fbf2d"/><path d="M1 9l0.700-2 1.500 1.400z" fill="#188f22"/></svg>
<svg style="left:296px;top:665.5px;" width="10" height="9" viewBox="0 0 10 9"><rect x="0.500" y="1.400" width="2.600" height="2.200" fill="#bbb"/><rect x="0.500" y="5" width="2.600" height="2.200" fill="#bbb"/><path d="M4.200 2.500h4.600M4.200 6.100h4.600" stroke="#777" stroke-width="0.800"/></svg>
<svg style="left:310.5px;top:665.5px;" width="10" height="9" viewBox="0 0 10 9"><rect x="0.800" y="1" width="7.400" height="4.400" fill="#2d8ceb"/><rect x="0.800" y="6.500" width="7.400" height="1.200" fill="#2d8ceb"/></svg>
<svg style="left:325px;top:665.5px;" width="11" height="9" viewBox="0 0 11 9"><rect x="0.500" y="1.600" width="3.600" height="2.600" fill="#bbb"/><rect x="3" y="3.400" width="4" height="2.800" fill="#999"/><rect x="5.600" y="4.800" width="4.400" height="3" fill="#ccc"/></svg>
<div style="left:345px;top:669.7px;width:30px;height:0.9px;background:#444;"></div>
<svg style="left:339.0px;top:665.1px;" width="10" height="10" viewBox="0 0 10 10"><circle cx="5" cy="5" r="2" fill="#222" stroke="#ccc" stroke-width="0.900"/></svg>
<svg style="left:384px;top:665.5px;" width="9" height="9" viewBox="0 0 9 9"><path d="M0.500 1.800h7.500M0.500 4.500h7.500M0.500 7.200h5" stroke="#bbb" stroke-width="1"/></svg>
<svg style="left:394.3px;top:665.0px;" width="10" height="10" viewBox="0 0 10 10"><path d="M3 4l2 2 2-2" fill="none" stroke="#888" stroke-width="0.900"/></svg>
<svg style="left:426.5px;top:666px;" width="9" height="8" viewBox="0 0 9 8"><rect x="0.500" y="1.600" width="3.400" height="4.800" fill="#bbb"/><rect x="4.400" y="2.600" width="3.800" height="3.800" fill="#999"/></svg>
<svg style="left:441px;top:665.5px;" width="9" height="9" viewBox="0 0 9 9"><circle cx="5.200" cy="3.600" r="2.300" fill="none" stroke="#ccc" stroke-width="0.900"/><path d="M3.600 5.400L1 8" stroke="#ccc" stroke-width="1"/></svg>
<svg style="left:456px;top:666px;" width="9" height="8" viewBox="0 0 9 8"><path d="M0.500 1h3l0.800 1h4.200v5H0.500z" fill="#bdbdbd"/></svg>
<svg style="left:471px;top:666px;" width="9" height="8" viewBox="0 0 9 8"><path d="M1 0.800h6.600v6.400l-2-2H1z" fill="#bdbdbd"/><rect x="1.800" y="3" width="3" height="3" fill="#555"/></svg>
<svg style="left:486.5px;top:665.5px;" width="8" height="9" viewBox="0 0 8 9"><rect x="1" y="2.400" width="6" height="6" rx="0.600" fill="#bdbdbd"/><rect x="2.600" y="0.800" width="2.800" height="1.600" fill="none" stroke="#bdbdbd" stroke-width="0.700"/><path d="M2.800 4v3M5.200 4v3" stroke="#444" stroke-width="0.600"/></svg>
<!-- tools -->
<div style="left:513px;top:422.2px;width:13px;height:12px;background:#151515;border-radius:1px"></div>
<svg style="left:514.5px;top:423.3px;" width="10" height="10" viewBox="0 0 10 10"><path d="M2.700 0.800v8l2-2.200 1.500 0.100L8.600 5.400z" fill="#2d8ceb"/></svg>
<svg style="left:529.0px;top:423.3px;" width="10" height="10" viewBox="0 0 10 10"><path d="M1 1.500v4" stroke="#ccc" stroke-width="1.100"/><path d="M2.600 1.800h3.400M1 7.400h4.600" stroke="#bbb" stroke-width="0.900" stroke-dasharray="1 0.900"/><path d="M3.600 4.600h4M6.200 3l1.800 1.600-1.800 1.600" fill="none" stroke="#ddd" stroke-width="1.100"/><path d="M9.600 8.600v1.600h-1.600z" fill="#aaa"/></svg>
<svg style="left:514.5px;top:437.0px;" width="10" height="10" viewBox="0 0 10 10"><path d="M5 1v8" stroke="#ddd" stroke-width="1"/><path d="M0.500 5l2.600-1.800v3.600zM9.500 5L6.900 3.200v3.600z" fill="#ccc"/><path d="M2.600 5h1.400M6 5h1.400" stroke="#ccc" stroke-width="0.900"/></svg>
<svg style="left:529.0px;top:437.0px;" width="10" height="10" viewBox="0 0 10 10"><path d="M2.200 2.400l2-1.400 4.600 5.600-2 1.600z" fill="#c8c8c8"/><path d="M4.200 3.400l2.600 3.200" stroke="#333" stroke-width="0.800"/></svg>
<svg style="left:514.5px;top:450.7px;" width="10" height="10" viewBox="0 0 10 10"><path d="M1 1.400v7.200M9 1.400v7.200" stroke="#ddd" stroke-width="1"/><path d="M2.200 5l2-1.600v3.200zM7.800 5l-2-1.600v3.200z" fill="#ccc"/></svg>
<svg style="left:529.0px;top:450.7px;" width="10" height="10" viewBox="0 0 10 10"><path d="M6.400 0.800l2.800 2.800-1.200 1.200-0.700-0.600-3 3-2.200 0.600 0.600-2.200 3-3-0.600-0.600z" fill="#c8c8c8"/><path d="M1 9l1.400-1.400" stroke="#c8c8c8" stroke-width="0.800"/></svg>
<svg style="left:514.5px;top:463.5px;" width="10" height="10" viewBox="0 0 10 10"><rect x="1.300" y="2" width="7.400" height="6" fill="#555" stroke="#9a9a9a" stroke-width="0.900"/><path d="M9.600 8.600v1.600h-1.600z" fill="#aaa"/></svg>
<svg style="left:529.0px;top:463.5px;" width="10" height="10" viewBox="0 0 10 10"><path d="M2.600 5.400V3a0.600 0.600 0 0 1 1.200 0V1.800a0.600 0.600 0 0 1 1.200 0v-0.400a0.600 0.600 0 0 1 1.200 0v0.800a0.600 0.600 0 0 1 1.200 0V6c0 2-1 3-2.600 3S2.800 8.400 1.600 6.400c-0.600-1 0.400-1.600 1-1z" fill="#c8c8c8"/><path d="M9.600 8.600v1.600h-1.600z" fill="#aaa"/></svg>
<svg style="left:514.5px;top:476.8px;" width="10" height="10" viewBox="0 0 10 10"><path d="M1.600 1.400h6.800v1.800H7.600V2.600H5.700v5.200h0.900v1H3.400v-1h0.900V2.600H2.400v0.600H1.600z" fill="#ddd"/><path d="M9.600 8.600v1.600h-1.600z" fill="#aaa"/></svg>
<!-- timeline -->
<svg style="left:549.0px;top:416.0px;" width="10" height="10" viewBox="0 0 10 10"><path d="M3.800 3.800l2.400 2.400M6.200 3.800L3.800 6.200" stroke="#8a8a8a" stroke-width="0.800"/></svg>
<span class="t" style="left:560.6px;top:418px;font-size:5.2px;line-height:5.2px;color:#ddd;transform:translateY(0.82px) rotate(0.01deg);font-style:italic">C0212</span>
<div style="left:581.8px;top:419px;width:4.6px;height:1px;background:#cfcfcf;"></div>
<div style="left:581.8px;top:422px;width:4.6px;height:1px;background:#cfcfcf;"></div>
<span class="t" style="left:555.6px;top:431px;font-size:7.9px;line-height:7.9px;color:#2d8ceb;transform:translateY(0.27px) rotate(0.01deg);">00:00:00:00</span>
<svg style="left:556.5px;top:440.2px;" width="10" height="10" viewBox="0 0 10 10"><path d="M5 1v3.600M2.400 4.800h5.200M3 7.600h4M1.600 2.400l1.200 1M8.400 2.400l-1.200 1M2.800 6.200L2 8.600M7.200 6.200L8 8.600" fill="none" stroke="#2d8ceb" stroke-width="1"/></svg>
<svg style="left:573.2px;top:440.2px;" width="10" height="10" viewBox="0 0 10 10"><path d="M2.200 8.400V4.600a2.800 2.800 0 0 1 5.600 0v3.800H6.200V4.600a1.200 1.200 0 0 0-2.400 0v3.800z" fill="#2d8ceb"/></svg>
<svg style="left:590.3px;top:440.2px;" width="10" height="10" viewBox="0 0 10 10"><path d="M2 1.400v7.400" stroke="#2d8ceb" stroke-width="1.100"/><path d="M3.200 1.600h5v3L5.700 7 3.200 4.600z" fill="#2d8ceb"/><path d="M8.600 1L3 8" stroke="#222" stroke-width="0.900"/></svg>
<svg style="left:607.3px;top:440.5px;" width="10" height="10" viewBox="0 0 10 10"><path d="M3.200 2.600h3.600v2.600L5 7.400 3.200 5.200z" fill="#bdbdbd"/></svg>
<svg style="left:623.8px;top:440.2px;" width="10" height="10" viewBox="0 0 10 10"><path d="M2 1.400a2.200 2.200 0 0 0 2.400 3l3.400 3.800 1-1-3.600-3.400A2.200 2.200 0 0 0 3 1l1 1.400-0.800 0.800z" fill="#d0d0d0"/></svg>
<svg style="left:640.8px;top:440.2px;" width="10" height="10" viewBox="0 0 10 10"><rect x="1" y="2.600" width="8" height="5" rx="0.800" fill="#3a3a3a"/><path d="M4.200 4.200h-1.600v1.800h1.600M7.400 4.200h-1.600v1.800h1.600" fill="none" stroke="#222" stroke-width="0.600"/></svg>
<div style="left:664px;top:450px;width:520.2px;height:217.5px;background:#1e1e1e;"></div>
<div style="left:547px;top:450.5px;width:117px;height:217px;background:#1e1e1e;"></div>
<svg style="left:0px;top:0px;" width="1268" height="690" viewBox="0 0 1268 690"><path d="M673.8 449v-2.2" stroke="#6a6a6a" stroke-width="0.600"/><path d="M682.6 449v-2.2" stroke="#6a6a6a" stroke-width="0.600"/><path d="M691.4 449v-2.2" stroke="#6a6a6a" stroke-width="0.600"/><path d="M700.1 449v-2.2" stroke="#6a6a6a" stroke-width="0.600"/><path d="M708.9 449v-2.2" stroke="#6a6a6a" stroke-width="0.600"/><path d="M717.7 449v-5" stroke="#6a6a6a" stroke-width="0.700"/><path d="M726.5 449v-2.2" stroke="#6a6a6a" stroke-width="0.600"/><path d="M735.3 449v-2.2" stroke="#6a6a6a" stroke-width="0.600"/><path d="M744.1 449v-2.2" stroke="#6a6a6a" stroke-width="0.600"/><path d="M752.9 449v-2.2" stroke="#6a6a6a" stroke-width="0.600"/><path d="M761.7 449v-2.2" stroke="#6a6a6a" stroke-width="0.600"/><path d="M770.4 449v-5" stroke="#6a6a6a" stroke-width="0.700"/><path d="M779.2 449v-2.2" stroke="#6a6a6a" stroke-width="0.600"/><path d="M788.0 449v-2.2" stroke="#6a6a6a" stroke-width="0.600"/><path d="M796.8 449v-2.2" stroke="#6a6a6a" stroke-width="0.600"/><path d="M805.6 449v-2.2" stroke="#6a6a6a" stroke-width="0.600"/><path d="M814.4 449v-2.2" stroke="#6a6a6a" stroke-width="0.600"/><path d="M823.2 449v-5" stroke="#6a6a6a" stroke-width="0.700"/><path d="M831.9 449v-2.2" stroke="#6a6a6a" stroke-width="0.600"/><path d="M840.7 449v-2.2" stroke="#6a6a6a" stroke-width="0.600"/><path d="M849.5 449v-2.2" stroke="#6a6a6a" stroke-width="0.600"/><path d="M858.3 449v-2.2" stroke="#6a6a6a" stroke-width="0.600"/><path d="M867.1 449v-2.2" stroke="#6a6a6a" stroke-width="0.600"/><path d="M875.9 449v-5" stroke="#6a6a6a" stroke-width="0.700"/><path d="M884.7 449v-2.2" stroke="#6a6a6a" stroke-width="0.600"/><path d="M893.5 449v-2.2" stroke="#6a6a6a" stroke-width="0.600"/><path d="M902.2 449v-2.2" stroke="#6a6a6a" stroke-width="0.600"/><path d="M911.0 449v-2.2" stroke="#6a6a6a" stroke-width="0.600"/><path d="M919.8 449v-2.2" stroke="#6a6a6a" stroke-width="0.600"/><path d="M928.6 449v-5" stroke="#6a6a6a" stroke-width="0.700"/><path d="M937.4 449v-2.2" stroke="#6a6a6a" stroke-width="0.600"/><path d="M946.2 449v-2.2" stroke="#6a6a6a" stroke-width="0.600"/><path d="M955.0 449v-2.2" stroke="#6a6a6a" stroke-width="0.600"/><path d="M963.7 449v-2.2" stroke="#6a6a6a" stroke-width="0.600"/><path d="M972.5 449v-2.2" stroke="#6a6a6a" stroke-width="0.600"/><path d="M981.3 449v-5" stroke="#6a6a6a" stroke-width="0.700"/><path d="M990.1 449v-2.2" stroke="#6a6a6a" stroke-width="0.600"/><path d="M998.9 449v-2.2" stroke="#6a6a6a" stroke-width="0.600"/><path d="M1007.7 449v-2.2" stroke="#6a6a6a" stroke-width="0.600"/><path d="M1016.5 449v-2.2" stroke="#6a6a6a" stroke-width="0.600"/><path d="M1025.3 449v-2.2" stroke="#6a6a6a" stroke-width="0.600"/><path d="M1034.0 449v-5" stroke="#6a6a6a" stroke-width="0.700"/><path d="M1042.8 449v-2.2" stroke="#6a6a6a" stroke-width="0.600"/><path d="M1051.6 449v-2.2" stroke="#6a6a6a" stroke-width="0.600"/><path d="M1060.4 449v-2.2" stroke="#6a6a6a" stroke-width="0.600"/><path d="M1069.2 449v-2.2" stroke="#6a6a6a" stroke-width="0.600"/><path d="M1078.0 449v-2.2" stroke="#6a6a6a" stroke-width="0.600"/><path d="M1086.8 449v-5" stroke="#6a6a6a" stroke-width="0.700"/><path d="M1095.5 449v-2.2" stroke="#6a6a6a" stroke-width="0.600"/><path d="M1104.3 449v-2.2" stroke="#6a6a6a" stroke-width="0.600"/><path d="M1113.1 449v-2.2" stroke="#6a6a6a" stroke-width="0.600"/><path d="M1121.9 449v-2.2" stroke="#6a6a6a" stroke-width="0.600"/><path d="M1130.7 449v-2.2" stroke="#6a6a6a" stroke-width="0.600"/><path d="M1139.5 449v-5" stroke="#6a6a6a" stroke-width="0.700"/><path d="M1148.3 449v-2.2" stroke="#6a6a6a" stroke-width="0.600"/><path d="M1157.1 449v-2.2" stroke="#6a6a6a" stroke-width="0.600"/><path d="M1165.8 449v-2.2" stroke="#6a6a6a" stroke-width="0.600"/><path d="M1174.6 449v-2.2" stroke="#6a6a6a" stroke-width="0.600"/></svg>
<div style="left:664px;top:436px;width:520px;height:7px;overflow:hidden"><span class="t a" style="left:-48.5px;width:100px;text-align:center;top:0px;font-size:5.250px;line-height:6px;color:#a0a0a0;transform:scaleY(1.05)">00:00:00:00</span><span class="t a" style="left:4.2px;width:100px;text-align:center;top:0px;font-size:5.250px;line-height:6px;color:#a0a0a0;transform:scaleY(1.05)">00:01:00:00</span><span class="t a" style="left:56.9px;width:100px;text-align:center;top:0px;font-size:5.250px;line-height:6px;color:#a0a0a0;transform:scaleY(1.05)">00:02:00:00</span><span class="t a" style="left:109.7px;width:100px;text-align:center;top:0px;font-size:5.250px;line-height:6px;color:#a0a0a0;transform:scaleY(1.05)">00:03:00:00</span><span class="t a" style="left:162.4px;width:100px;text-align:center;top:0px;font-size:5.250px;line-height:6px;color:#a0a0a0;transform:scaleY(1.05)">00:04:00:00</span><span class="t a" style="left:215.1px;width:100px;text-align:center;top:0px;font-size:5.250px;line-height:6px;color:#a0a0a0;transform:scaleY(1.05)">00:05:00:00</span><span class="t a" style="left:267.8px;width:100px;text-align:center;top:0px;font-size:5.250px;line-height:6px;color:#a0a0a0;transform:scaleY(1.05)">00:06:00:00</span><span class="t a" style="left:320.5px;width:100px;text-align:center;top:0px;font-size:5.250px;line-height:6px;color:#a0a0a0;transform:scaleY(1.05)">00:07:00:00</span><span class="t a" style="left:373.3px;width:100px;text-align:center;top:0px;font-size:5.250px;line-height:6px;color:#a0a0a0;transform:scaleY(1.05)">00:08:00:00</span><span class="t a" style="left:426.0px;width:100px;text-align:center;top:0px;font-size:5.250px;line-height:6px;color:#a0a0a0;transform:scaleY(1.05)">00:09:00:00</span><span class="t a" style="left:478.7px;width:100px;text-align:center;top:0px;font-size:5.250px;line-height:6px;color:#a0a0a0;transform:scaleY(1.05)">00:10:00:00</span></div>
<div style="left:664px;top:448.9px;width:520.2px;height:1.3px;background:#ebe41c;"></div>
<div style="left:547px;top:520.3px;width:117px;height:37.1px;background:#2a2a2a;"></div>
<div style="left:547px;top:557.4px;width:637.2px;height:1.6px;background:#303030;"></div>
<div style="left:547px;top:559px;width:117px;height:37.3px;background:#2a2a2a;"></div>
<div style="left:547px;top:596.3px;width:117px;height:12.2px;background:#262626;"></div>
<div style="left:664px;top:520.3px;width:520.2px;height:37.1px;background:#202020;"></div>
<div style="left:664px;top:559px;width:520.2px;height:37.3px;background:#202020;"></div>
<div style="left:664px;top:596.3px;width:520.2px;height:12.2px;background:#212121;"></div>
<div style="left:547px;top:520.0px;width:637.2px;height:0.7px;background:#1a1a1a;"></div>
<div style="left:547px;top:532.0px;width:637.2px;height:0.7px;background:#1a1a1a;"></div>
<div style="left:547px;top:544.3000000000001px;width:637.2px;height:0.7px;background:#1a1a1a;"></div>
<div style="left:547px;top:571.3000000000001px;width:637.2px;height:0.7px;background:#1a1a1a;"></div>
<div style="left:547px;top:583.7px;width:637.2px;height:0.7px;background:#1a1a1a;"></div>
<div style="left:547px;top:596.0px;width:637.2px;height:0.7px;background:#1a1a1a;"></div>
<div style="left:547px;top:608.2px;width:637.2px;height:0.7px;background:#2c2c2c;"></div>
<div style="left:664px;top:520px;width:520.2px;height:0.7px;background:#2e2e2e;"></div>
<div style="left:664px;top:608.3px;width:520.2px;height:0.7px;background:#2e2e2e;"></div>
<div style="left:553px;top:545.2px;width:16px;height:11.6px;background:#0d5a8c;"></div>
<span class="t" style="left:411.0px;width:300px;text-align:center;top:550px;font-size:4.6px;line-height:4.6px;color:#4f96cf;transform:translateY(0.16px) rotate(0.01deg);">V1</span>
<div style="left:553px;top:559.6px;width:16px;height:11.4px;background:#0d5a8c;"></div>
<span class="t" style="left:411.0px;width:300px;text-align:center;top:564px;font-size:4.6px;line-height:4.6px;color:#63abe3;transform:translateY(0.56px) rotate(0.01deg);">A1</span>
<svg style="left:570.45px;top:522.25px;" width="7.5" height="7.5" viewBox="0 0 10 10"><rect x="2.800" y="4.600" width="4.400" height="3.600" fill="#d6d6d6"/><path d="M3.800 4.600V3.200a1.500 1.500 0 0 1 3 0" fill="none" stroke="#d6d6d6" stroke-width="0.900"/></svg>
<span class="t" style="left:437.20000000000005px;width:300px;text-align:center;top:525px;font-size:4.9px;line-height:4.9px;color:#5f7388;transform:translateY(0.46px) rotate(0.01deg);">V3</span>
<svg style="left:597.8px;top:522.3px;" width="8" height="8" viewBox="0 0 10 10"><rect x="2" y="2.400" width="5.800" height="5.200" fill="#d8d8d8"/><rect x="4" y="3.800" width="1.800" height="2.400" fill="#2a2a2a"/></svg>
<svg style="left:611.0px;top:522.3px;" width="8" height="8" viewBox="0 0 10 10"><path d="M1.400 5.200c1.200-1.700 2.300-2.300 3.600-2.300s2.400 0.600 3.600 2.300C7.400 6.900 6.300 7.500 5 7.500S2.600 6.900 1.400 5.200z" fill="none" stroke="#ddd" stroke-width="1.050"/><circle cx="5" cy="5.200" r="0.700" fill="#bbb"/></svg>
<svg style="left:570.45px;top:534.4000000000001px;" width="7.5" height="7.5" viewBox="0 0 10 10"><rect x="2.800" y="4.600" width="4.400" height="3.600" fill="#d6d6d6"/><path d="M3.800 4.600V3.200a1.500 1.500 0 0 1 3 0" fill="none" stroke="#d6d6d6" stroke-width="0.900"/></svg>
<span class="t" style="left:437.20000000000005px;width:300px;text-align:center;top:537px;font-size:4.9px;line-height:4.9px;color:#5f7388;transform:translateY(0.61px) rotate(0.01deg);">V2</span>
<svg style="left:597.8px;top:534.45px;" width="8" height="8" viewBox="0 0 10 10"><path d="M2.200 2.600h4l2 2.400-2 2.400h-4z" fill="none" stroke="#ddd" stroke-width="1"/></svg>
<svg style="left:611.0px;top:534.45px;" width="8" height="8" viewBox="0 0 10 10"><path d="M1.400 5.200c1.200-1.700 2.300-2.300 3.600-2.300s2.400 0.600 3.600 2.300C7.400 6.900 6.300 7.500 5 7.500S2.600 6.900 1.400 5.200z" fill="none" stroke="#ddd" stroke-width="1.050"/><circle cx="5" cy="5.200" r="0.700" fill="#bbb"/></svg>
<svg style="left:570.45px;top:546.95px;" width="7.5" height="7.5" viewBox="0 0 10 10"><rect x="2.800" y="4.600" width="4.400" height="3.600" fill="#d6d6d6"/><path d="M3.800 4.600V3.200a1.500 1.500 0 0 1 3 0" fill="none" stroke="#d6d6d6" stroke-width="0.900"/></svg>
<div style="left:579px;top:545.1px;width:16.3px;height:11.799999999999955px;background:#0d5a8c;"></div>
<span class="t" style="left:437.20000000000005px;width:300px;text-align:center;top:550px;font-size:4.9px;line-height:4.9px;color:#63abe3;transform:translateY(0.16px) rotate(0.01deg);">V1</span>
<svg style="left:597.8px;top:547.0px;" width="8" height="8" viewBox="0 0 10 10"><rect x="2" y="2.400" width="5.800" height="5.200" fill="#d8d8d8"/><rect x="4" y="3.800" width="1.800" height="2.400" fill="#2a2a2a"/></svg>
<svg style="left:611.0px;top:547.0px;" width="8" height="8" viewBox="0 0 10 10"><path d="M1.400 5.200c1.200-1.700 2.300-2.300 3.600-2.300s2.400 0.600 3.600 2.300C7.400 6.900 6.300 7.500 5 7.500S2.600 6.900 1.400 5.200z" fill="none" stroke="#ddd" stroke-width="1.050"/><circle cx="5" cy="5.200" r="0.700" fill="#bbb"/></svg>
<svg style="left:570.45px;top:561.25px;" width="7.5" height="7.5" viewBox="0 0 10 10"><rect x="2.800" y="4.600" width="4.400" height="3.600" fill="#d6d6d6"/><path d="M3.800 4.600V3.200a1.500 1.500 0 0 1 3 0" fill="none" stroke="#d6d6d6" stroke-width="0.900"/></svg>
<div style="left:579px;top:559.5px;width:16.3px;height:11.600000000000023px;background:#0d5a8c;"></div>
<span class="t" style="left:437.20000000000005px;width:300px;text-align:center;top:564px;font-size:4.9px;line-height:4.9px;color:#63abe3;transform:translateY(0.46px) rotate(0.01deg);">A1</span>
<svg style="left:597.8px;top:561.3px;" width="8" height="8" viewBox="0 0 10 10"><rect x="2" y="2.400" width="5.800" height="5.200" fill="#d8d8d8"/><rect x="4" y="3.800" width="1.800" height="2.400" fill="#2a2a2a"/></svg>
<span class="t" style="left:465.0px;width:300px;text-align:center;top:564px;font-size:4.9px;line-height:4.9px;color:#b8b8b8;transform:translateY(0.46px) rotate(0.01deg);">M</span>
<span class="t" style="left:478.20000000000005px;width:300px;text-align:center;top:564px;font-size:4.9px;line-height:4.9px;color:#b8b8b8;transform:translateY(0.46px) rotate(0.01deg);">S</span>
<svg style="left:636.5px;top:560.3px;" width="10" height="10" viewBox="0 0 10 10"><rect x="4" y="1.400" width="2" height="4.600" rx="1" fill="#5a5a5a"/><path d="M2.800 5c0 3 4.400 3 4.400 0M5 7.200v1.400M3.600 8.600h2.800" fill="none" stroke="#5a5a5a" stroke-width="0.700"/></svg>
<svg style="left:570.45px;top:573.75px;" width="7.5" height="7.5" viewBox="0 0 10 10"><rect x="2.800" y="4.600" width="4.400" height="3.600" fill="#d6d6d6"/><path d="M3.800 4.600V3.200a1.500 1.500 0 0 1 3 0" fill="none" stroke="#d6d6d6" stroke-width="0.900"/></svg>
<div style="left:579px;top:572.1px;width:16.3px;height:11.399999999999977px;background:#0d5a8c;"></div>
<span class="t" style="left:437.20000000000005px;width:300px;text-align:center;top:576px;font-size:4.9px;line-height:4.9px;color:#63abe3;transform:translateY(0.96px) rotate(0.01deg);">A2</span>
<svg style="left:597.8px;top:573.8px;" width="8" height="8" viewBox="0 0 10 10"><rect x="2" y="2.400" width="5.600" height="5.200" fill="none" stroke="#ddd" stroke-width="0.900"/><path d="M2 5h5.600M4.800 2.400v5.200" stroke="#ddd" stroke-width="0.800"/></svg>
<span class="t" style="left:465.0px;width:300px;text-align:center;top:576px;font-size:4.9px;line-height:4.9px;color:#b8b8b8;transform:translateY(0.96px) rotate(0.01deg);">M</span>
<span class="t" style="left:478.20000000000005px;width:300px;text-align:center;top:576px;font-size:4.9px;line-height:4.9px;color:#b8b8b8;transform:translateY(0.96px) rotate(0.01deg);">S</span>
<svg style="left:636.5px;top:572.8px;" width="10" height="10" viewBox="0 0 10 10"><rect x="4" y="1.400" width="2" height="4.600" rx="1" fill="#5a5a5a"/><path d="M2.800 5c0 3 4.400 3 4.400 0M5 7.200v1.400M3.600 8.600h2.800" fill="none" stroke="#5a5a5a" stroke-width="0.700"/></svg>
<svg style="left:570.45px;top:586.1px;" width="7.5" height="7.5" viewBox="0 0 10 10"><rect x="2.800" y="4.600" width="4.400" height="3.600" fill="#d6d6d6"/><path d="M3.800 4.600V3.200a1.500 1.500 0 0 1 3 0" fill="none" stroke="#d6d6d6" stroke-width="0.900"/></svg>
<div style="left:579px;top:584.5px;width:16.3px;height:11.299999999999955px;background:#0d5a8c;"></div>
<span class="t" style="left:437.20000000000005px;width:300px;text-align:center;top:589px;font-size:4.9px;line-height:4.9px;color:#63abe3;transform:translateY(0.31px) rotate(0.01deg);">A3</span>
<svg style="left:597.8px;top:586.15px;" width="8" height="8" viewBox="0 0 10 10"><rect x="2" y="2.400" width="5.800" height="5.200" fill="#d8d8d8"/><rect x="4" y="3.800" width="1.800" height="2.400" fill="#2a2a2a"/></svg>
<span class="t" style="left:465.0px;width:300px;text-align:center;top:589px;font-size:4.9px;line-height:4.9px;color:#b8b8b8;transform:translateY(0.31px) rotate(0.01deg);">M</span>
<span class="t" style="left:478.20000000000005px;width:300px;text-align:center;top:589px;font-size:4.9px;line-height:4.9px;color:#b8b8b8;transform:translateY(0.31px) rotate(0.01deg);">S</span>
<svg style="left:636.5px;top:585.15px;" width="10" height="10" viewBox="0 0 10 10"><rect x="4" y="1.400" width="2" height="4.600" rx="1" fill="#5a5a5a"/><path d="M2.800 5c0 3 4.400 3 4.400 0M5 7.200v1.400M3.600 8.600h2.800" fill="none" stroke="#5a5a5a" stroke-width="0.700"/></svg>
<svg style="left:570.45px;top:598.25px;" width="7.5" height="7.5" viewBox="0 0 10 10"><rect x="2.800" y="4.600" width="4.400" height="3.600" fill="#d6d6d6"/><path d="M3.800 4.600V3.200a1.500 1.500 0 0 1 3 0" fill="none" stroke="#d6d6d6" stroke-width="0.900"/></svg>
<span class="t" style="left:581px;top:600.30px;font-size:6.2px;line-height:6.2px;height:6.2px"><svg class="ci" width="12.40" height="6.20" viewBox="0 0 20 10" style="opacity:0.7"><g fill="none" stroke="#bbb" stroke-width="1.1"><path transform="translate(0.4,0) scale(0.92,1)" d="M1 1.6l2 1.4-2 2h2.4M1 7.6l2.2-1M4.6 1.4h4.6v2.4H4.6zM4.6 5h4.8v4M4.6 5v4.2M6.2 5v4M7.8 5v4M4.6 7h4.8"/><path transform="translate(10.4,0) scale(0.92,1)" d="M0.8 1.6h8.4M2.6 1.6v3.4h5V1.6M1 7h8M5 5v4.4M2 9l1.6-2M8 9L6.4 7"/></g></svg></span>
<span class="t" style="left:472.20000000000005px;width:300px;text-align:center;top:600px;font-size:5.2px;line-height:5.2px;color:#2d8ceb;transform:translateY(0.62px) rotate(0.01deg);">0.0</span>
<svg style="left:652.0px;top:595.6px;" width="10" height="10" viewBox="0 0 10 10"><path d="M1.600 2.400L4.400 5 1.600 7.600zM8.400 2.400L5.600 5l2.800 2.600z" fill="#ddd"/><path d="M5 2v6" stroke="#ddd" stroke-width="0.700"/></svg>
<svg style="left:0px;top:0px;" width="1268" height="690" viewBox="0 0 1268 690"><rect x="665" y="544.9" width="164.79999999999995" height="12.300000000000068" fill="#7199d0"/><rect x="665" y="559" width="164.79999999999995" height="12.700000000000045" fill="#3b4c67"/><path d="M665 565.5500000000001h164.79999999999995" stroke="#2f3e56" stroke-width="0.800"/><path d="M665 571.2h164.79999999999995" stroke="#5d82b5" stroke-width="0.900"/><path d="M665.3 544.9v12.300000000000068M665.3 559v12.700000000000045" stroke="#33455f" stroke-width="0.600"/><rect x="669" y="547.1" width="5" height="5" fill="#8f8f8f" stroke="#2a2a2a" stroke-width="0.600"/><path d="M670.3 550.8000000000001L672.7 548.4M670.3 548.7h1.800" stroke="#333" stroke-width="0.700"/><rect x="669" y="561" width="5" height="5" fill="#8f8f8f" stroke="#2a2a2a" stroke-width="0.600"/><path d="M670.3 564.7L672.7 562.3M670.3 562.6h1.800" stroke="#333" stroke-width="0.700"/><rect x="851.3" y="544.9" width="14.900000000000091" height="12.300000000000068" fill="#7199d0"/><rect x="851.3" y="559" width="14.900000000000091" height="12.700000000000045" fill="#3b4c67"/><path d="M851.3 565.5500000000001h14.900000000000091" stroke="#2f3e56" stroke-width="0.800"/><path d="M851.3 571.2h14.900000000000091" stroke="#5d82b5" stroke-width="0.900"/><path d="M851.5999999999999 544.9v12.300000000000068M851.5999999999999 559v12.700000000000045" stroke="#33455f" stroke-width="0.600"/><rect x="855.3" y="547.1" width="5" height="5" fill="#8f8f8f" stroke="#2a2a2a" stroke-width="0.600"/><path d="M856.5999999999999 550.8000000000001L859.0 548.4M856.5999999999999 548.7h1.800" stroke="#333" stroke-width="0.700"/><rect x="855.3" y="561" width="5" height="5" fill="#8f8f8f" stroke="#2a2a2a" stroke-width="0.600"/><path d="M856.5999999999999 564.7L859.0 562.3M856.5999999999999 562.6h1.800" stroke="#333" stroke-width="0.700"/><rect x="866.2" y="544.9" width="111.09999999999991" height="12.300000000000068" fill="#7199d0"/><rect x="866.2" y="559" width="111.09999999999991" height="12.700000000000045" fill="#3b4c67"/><path d="M866.2 565.5500000000001h111.09999999999991" stroke="#2f3e56" stroke-width="0.800"/><path d="M866.2 571.2h111.09999999999991" stroke="#5d82b5" stroke-width="0.900"/><path d="M866.5 544.9v12.300000000000068M866.5 559v12.700000000000045" stroke="#33455f" stroke-width="0.600"/><rect x="867.2" y="545.6" width="109.09999999999991" height="10.900000000000068" fill="none" stroke="#dedede" stroke-width="1.800"/><rect x="867.2" y="559.7" width="109.09999999999991" height="11.300000000000045" fill="none" stroke="#dedede" stroke-width="1.800"/><rect x="871.2" y="547.5" width="4.6" height="4.6" fill="#8f8f8f" stroke="#2a2a2a" stroke-width="0.600"/><path d="M872.5 550.8000000000001L874.5000000000001 548.8M872.5 549.1h1.800" stroke="#333" stroke-width="0.700"/><rect x="871.2" y="561.4" width="4.6" height="4.6" fill="#8f8f8f" stroke="#2a2a2a" stroke-width="0.600"/><path d="M872.5 564.7L874.5000000000001 562.6999999999999M872.5 563.0h1.800" stroke="#333" stroke-width="0.700"/><rect x="977.3" y="544.9" width="94.40000000000009" height="12.300000000000068" fill="#7199d0"/><rect x="977.3" y="559" width="94.40000000000009" height="12.700000000000045" fill="#3b4c67"/><path d="M977.3 565.5500000000001h94.40000000000009" stroke="#2f3e56" stroke-width="0.800"/><path d="M977.3 571.2h94.40000000000009" stroke="#5d82b5" stroke-width="0.900"/><path d="M977.5999999999999 544.9v12.300000000000068M977.5999999999999 559v12.700000000000045" stroke="#33455f" stroke-width="0.600"/><rect x="981.3" y="547.1" width="5" height="5" fill="#8f8f8f" stroke="#2a2a2a" stroke-width="0.600"/><path d="M982.5999999999999 550.8000000000001L985.0 548.4M982.5999999999999 548.7h1.800" stroke="#333" stroke-width="0.700"/><rect x="981.3" y="561" width="5" height="5" fill="#8f8f8f" stroke="#2a2a2a" stroke-width="0.600"/><path d="M982.5999999999999 564.7L985.0 562.3M982.5999999999999 562.6h1.800" stroke="#333" stroke-width="0.700"/><rect x="1071.7" y="544.9" width="18.899999999999864" height="12.300000000000068" fill="#7199d0"/><rect x="1071.7" y="559" width="18.899999999999864" height="12.700000000000045" fill="#3b4c67"/><path d="M1071.7 565.5500000000001h18.899999999999864" stroke="#2f3e56" stroke-width="0.800"/><path d="M1071.7 571.2h18.899999999999864" stroke="#5d82b5" stroke-width="0.900"/><path d="M1072.0 544.9v12.300000000000068M1072.0 559v12.700000000000045" stroke="#33455f" stroke-width="0.600"/><rect x="1075.7" y="547.1" width="5" height="5" fill="#8f8f8f" stroke="#2a2a2a" stroke-width="0.600"/><path d="M1077.0 550.8000000000001L1079.4 548.4M1077.0 548.7h1.800" stroke="#333" stroke-width="0.700"/><rect x="1075.7" y="561" width="5" height="5" fill="#8f8f8f" stroke="#2a2a2a" stroke-width="0.600"/><path d="M1077.0 564.7L1079.4 562.3M1077.0 562.6h1.800" stroke="#333" stroke-width="0.700"/><rect x="1090.6" y="544.9" width="93.60000000000014" height="12.300000000000068" fill="#7199d0"/><rect x="1090.6" y="559" width="93.60000000000014" height="12.700000000000045" fill="#3b4c67"/><path d="M1090.6 565.5500000000001h93.60000000000014" stroke="#2f3e56" stroke-width="0.800"/><path d="M1090.6 571.2h93.60000000000014" stroke="#5d82b5" stroke-width="0.900"/><path d="M1090.8999999999999 544.9v12.300000000000068M1090.8999999999999 559v12.700000000000045" stroke="#33455f" stroke-width="0.600"/><rect x="1094.6" y="547.1" width="5" height="5" fill="#8f8f8f" stroke="#2a2a2a" stroke-width="0.600"/><path d="M1095.8999999999999 550.8000000000001L1098.3 548.4M1095.8999999999999 548.7h1.800" stroke="#333" stroke-width="0.700"/><rect x="1094.6" y="561" width="5" height="5" fill="#8f8f8f" stroke="#2a2a2a" stroke-width="0.600"/><path d="M1095.8999999999999 564.7L1098.3 562.3M1095.8999999999999 562.6h1.800" stroke="#333" stroke-width="0.700"/><path d="M828.1999999999999 544.9h3.200l-1.600 1.800zM828.1999999999999 559h3.200l-1.600 1.800z" fill="#e8e8e8"/><path d="M849.6999999999999 544.9h3.200l-1.600 1.800zM849.6999999999999 559h3.200l-1.600 1.800z" fill="#e8e8e8"/><path d="M864.6 544.9h3.200l-1.600 1.800zM864.6 559h3.200l-1.600 1.800z" fill="#e8e8e8"/><path d="M975.6999999999999 544.9h3.200l-1.600 1.800zM975.6999999999999 559h3.200l-1.600 1.800z" fill="#e8e8e8"/><path d="M1070.1000000000001 544.9h3.200l-1.600 1.800zM1070.1000000000001 559h3.200l-1.600 1.800z" fill="#e8e8e8"/><path d="M1089.0 544.9h3.200l-1.600 1.800zM1089.0 559h3.200l-1.600 1.800z" fill="#e8e8e8"/><rect x="827.600" y="532.700" width="23.400" height="12" fill="#7199d0"/><rect x="832.5" y="535" width="5" height="5" fill="#8f8f8f" stroke="#2a2a2a" stroke-width="0.600"/><path d="M833.8 538.7L836.2 536.3M833.8 536.6h1.800" stroke="#333" stroke-width="0.700"/><rect x="827.600" y="572" width="23.400" height="11.600" fill="#3b4c67"/><path d="M827.600 583.200h23.400" stroke="#4a6690" stroke-width="0.700"/><rect x="832.5" y="574.2" width="4.8" height="4.8" fill="#8f8f8f" stroke="#2a2a2a" stroke-width="0.600"/><path d="M833.8 577.7L836.0 575.5M833.8 575.8000000000001h1.800" stroke="#333" stroke-width="0.700"/><path d="M827.600 532.700h2.400l-2.400 2zM851 532.700h-2.400l2.400 2z" fill="#dfe7f3" opacity="0.800"/></svg>
<span class="t" style="left:679.5px;top:548px;font-size:4.5px;line-height:4.5px;color:#161c2a;transform:translateY(0.56px) rotate(0.01deg) scaleY(1.12);;transform-origin:50% 0.94px">C0212.MP4 [V]</span>
<span class="t" style="left:880.7px;top:548px;font-size:4.5px;line-height:4.5px;color:#161c2a;transform:translateY(0.56px) rotate(0.01deg) scaleY(1.12);;transform-origin:50% 0.94px">C0201.MP4 [V]</span>
<span class="t" style="left:991.8px;top:548px;font-size:4.5px;line-height:4.5px;color:#161c2a;transform:translateY(0.56px) rotate(0.01deg) scaleY(1.12);;transform-origin:50% 0.94px">C0206.MP4 [V]</span>
<span class="t" style="left:1105.1px;top:548px;font-size:4.5px;line-height:4.5px;color:#161c2a;transform:translateY(0.56px) rotate(0.01deg) scaleY(1.12);;transform-origin:50% 0.94px">C0212.MP4 [V]</span>
<span class="t" style="left:841.5px;top:535px;font-size:5px;line-height:5px;color:#141a2a;transform:translateY(0.66px) rotate(0.01deg);font-style:italic;font-weight:bold;letter-spacing:-0.3px">/0?</span>
<svg style="left:663.6px;top:442.5px;" width="4.4" height="6.4" viewBox="0 0 4.4 6.4"><path d="M0.200 0.400a0.400 0.400 0 0 1 0.400-0.400h3.200a0.400 0.400 0 0 1 0.400 0.400v3.800L2.200 6.300 0.200 4.200z" fill="#2d8ceb"/></svg>
<div style="left:664.2px;top:448px;width:1px;height:219.5px;background:#2d7fd3;"></div>
<div style="left:1184.6px;top:456px;width:4.4px;height:97px;background:#333;"></div>
<div style="left:1184.6px;top:564px;width:4.4px;height:97.5px;background:#333;"></div>
<svg style="left:1181.8px;top:450.3px;" width="10" height="10" viewBox="0 0 10 10"><circle cx="5" cy="5" r="2.100" fill="#222" stroke="#d0d0d0" stroke-width="0.900"/></svg>
<svg style="left:1181.8px;top:549.3px;" width="10" height="10" viewBox="0 0 10 10"><circle cx="5" cy="5" r="2.100" fill="#222" stroke="#d0d0d0" stroke-width="0.900"/></svg>
<svg style="left:1181.8px;top:557.9px;" width="10" height="10" viewBox="0 0 10 10"><circle cx="5" cy="5" r="2.100" fill="#222" stroke="#d0d0d0" stroke-width="0.900"/></svg>
<svg style="left:1181.8px;top:657.6px;" width="10" height="10" viewBox="0 0 10 10"><circle cx="5" cy="5" r="2.100" fill="#222" stroke="#d0d0d0" stroke-width="0.900"/></svg>
<div style="left:556px;top:668.2px;width:627px;height:4.6px;background:#2a2a2a;"></div>
<div style="left:556px;top:668.2px;width:429px;height:4.6px;background:#353535;"></div>
<svg style="left:551.2px;top:665.5px;" width="10" height="10" viewBox="0 0 10 10"><circle cx="5" cy="5" r="2.100" fill="#222" stroke="#d0d0d0" stroke-width="0.900"/></svg>
<svg style="left:979.8px;top:665.5px;" width="10" height="10" viewBox="0 0 10 10"><circle cx="5" cy="5" r="2.100" fill="#222" stroke="#d0d0d0" stroke-width="0.900"/></svg>
<!-- meters -->
<div style="left:1203.3px;top:427.2px;width:47.8px;height:235px;background:#1c1c1c;"></div>
<div style="left:1203.3px;top:427.2px;width:47.8px;height:3.6px;background:#212121;"></div>
<div style="left:1227px;top:427.2px;width:0.8px;height:3.6px;background:#2a2a2a;"></div>
<div style="left:1203.3px;top:430.6px;width:47.8px;height:0.9px;background:#0c0c0c;"></div>
<div style="left:1203.3px;top:661px;width:47.8px;height:1.1px;background:#d8d020;"></div>
<span class="t" style="right:4.5px;top:430px;font-size:4.3px;line-height:4.3px;color:#8c8c8c;transform:translateY(0.23px) rotate(0.01deg) scaleY(1.1);;transform-origin:50% 1.47px">0</span>
<span class="t" style="right:4.5px;top:441px;font-size:4.3px;line-height:4.3px;color:#8c8c8c;transform:translateY(0.70px) rotate(0.01deg) scaleY(1.1);;transform-origin:50% 1.47px">-3</span>
<span class="t" style="right:4.5px;top:453px;font-size:4.3px;line-height:4.3px;color:#8c8c8c;transform:translateY(0.17px) rotate(0.01deg) scaleY(1.1);;transform-origin:50% 1.47px">-6</span>
<span class="t" style="right:4.5px;top:464px;font-size:4.3px;line-height:4.3px;color:#8c8c8c;transform:translateY(0.64px) rotate(0.01deg) scaleY(1.1);;transform-origin:50% 1.47px">-9</span>
<span class="t" style="right:4.5px;top:476px;font-size:4.3px;line-height:4.3px;color:#8c8c8c;transform:translateY(0.11px) rotate(0.01deg) scaleY(1.1);;transform-origin:50% 1.47px">-12</span>
<span class="t" style="right:4.5px;top:487px;font-size:4.3px;line-height:4.3px;color:#8c8c8c;transform:translateY(0.58px) rotate(0.01deg) scaleY(1.1);;transform-origin:50% 1.47px">-15</span>
<span class="t" style="right:4.5px;top:499px;font-size:4.3px;line-height:4.3px;color:#8c8c8c;transform:translateY(0.05px) rotate(0.01deg) scaleY(1.1);;transform-origin:50% 1.47px">-18</span>
<span class="t" style="right:4.5px;top:510px;font-size:4.3px;line-height:4.3px;color:#8c8c8c;transform:translateY(0.52px) rotate(0.01deg) scaleY(1.1);;transform-origin:50% 1.47px">-21</span>
<span class="t" style="right:4.5px;top:521px;font-size:4.3px;line-height:4.3px;color:#8c8c8c;transform:translateY(0.99px) rotate(0.01deg) scaleY(1.1);;transform-origin:50% 1.47px">-24</span>
<span class="t" style="right:4.5px;top:533px;font-size:4.3px;line-height:4.3px;color:#8c8c8c;transform:translateY(0.46px) rotate(0.01deg) scaleY(1.1);;transform-origin:50% 1.47px">-27</span>
<span class="t" style="right:4.5px;top:544px;font-size:4.3px;line-height:4.3px;color:#8c8c8c;transform:translateY(0.93px) rotate(0.01deg) scaleY(1.1);;transform-origin:50% 1.47px">-30</span>
<span class="t" style="right:4.5px;top:556px;font-size:4.3px;line-height:4.3px;color:#8c8c8c;transform:translateY(0.40px) rotate(0.01deg) scaleY(1.1);;transform-origin:50% 1.47px">-33</span>
<span class="t" style="right:4.5px;top:567px;font-size:4.3px;line-height:4.3px;color:#8c8c8c;transform:translateY(0.87px) rotate(0.01deg) scaleY(1.1);;transform-origin:50% 1.47px">-36</span>
<span class="t" style="right:4.5px;top:579px;font-size:4.3px;line-height:4.3px;color:#8c8c8c;transform:translateY(0.34px) rotate(0.01deg) scaleY(1.1);;transform-origin:50% 1.47px">-39</span>
<span class="t" style="right:4.5px;top:590px;font-size:4.3px;line-height:4.3px;color:#8c8c8c;transform:translateY(0.81px) rotate(0.01deg) scaleY(1.1);;transform-origin:50% 1.47px">-42</span>
<span class="t" style="right:4.5px;top:602px;font-size:4.3px;line-height:4.3px;color:#8c8c8c;transform:translateY(0.28px) rotate(0.01deg) scaleY(1.1);;transform-origin:50% 1.47px">-45</span>
<span class="t" style="right:4.5px;top:613px;font-size:4.3px;line-height:4.3px;color:#8c8c8c;transform:translateY(0.75px) rotate(0.01deg) scaleY(1.1);;transform-origin:50% 1.47px">-48</span>
<span class="t" style="right:4.5px;top:625px;font-size:4.3px;line-height:4.3px;color:#8c8c8c;transform:translateY(0.22px) rotate(0.01deg) scaleY(1.1);;transform-origin:50% 1.47px">-51</span>
<span class="t" style="right:4.5px;top:636px;font-size:4.3px;line-height:4.3px;color:#8c8c8c;transform:translateY(0.69px) rotate(0.01deg) scaleY(1.1);;transform-origin:50% 1.47px">-54</span>
<span class="t" style="right:4.5px;top:648px;font-size:4.3px;line-height:4.3px;color:#8c8c8c;transform:translateY(0.16px) rotate(0.01deg) scaleY(1.1);;transform-origin:50% 1.47px">-57</span>
<span class="t" style="right:4.5px;top:659px;font-size:4.3px;line-height:4.3px;color:#8c8c8c;transform:translateY(0.63px) rotate(0.01deg) scaleY(1.1);;transform-origin:50% 1.47px">dB</span>
<svg style="left:0px;top:0px;" width="1268" height="690" viewBox="0 0 1268 690"><path d="M1251.300 431.7h2.6" stroke="#808080" stroke-width="0.600" opacity="0.9"/><path d="M1251.300 443.2h1.5" stroke="#808080" stroke-width="0.600" opacity="0.55"/><path d="M1251.300 454.6h1.5" stroke="#808080" stroke-width="0.600" opacity="0.55"/><path d="M1251.300 466.1h1.5" stroke="#808080" stroke-width="0.600" opacity="0.55"/><path d="M1251.300 477.6h1.5" stroke="#808080" stroke-width="0.600" opacity="0.55"/><path d="M1251.300 489.1h1.5" stroke="#808080" stroke-width="0.600" opacity="0.55"/><path d="M1251.300 500.5h2.6" stroke="#808080" stroke-width="0.600" opacity="0.9"/><path d="M1251.300 512.0h1.5" stroke="#808080" stroke-width="0.600" opacity="0.55"/><path d="M1251.300 523.5h1.5" stroke="#808080" stroke-width="0.600" opacity="0.55"/><path d="M1251.300 534.9h2.6" stroke="#808080" stroke-width="0.600" opacity="0.9"/><path d="M1251.300 546.4h1.5" stroke="#808080" stroke-width="0.600" opacity="0.55"/><path d="M1251.300 557.9h1.5" stroke="#808080" stroke-width="0.600" opacity="0.55"/><path d="M1251.300 569.3h2.6" stroke="#808080" stroke-width="0.600" opacity="0.9"/><path d="M1251.300 580.8h1.5" stroke="#808080" stroke-width="0.600" opacity="0.55"/><path d="M1251.300 592.3h1.5" stroke="#808080" stroke-width="0.600" opacity="0.55"/><path d="M1251.300 603.8h2.6" stroke="#808080" stroke-width="0.600" opacity="0.9"/><path d="M1251.300 615.2h1.5" stroke="#808080" stroke-width="0.600" opacity="0.55"/><path d="M1251.300 626.7h1.5" stroke="#808080" stroke-width="0.600" opacity="0.55"/><path d="M1251.300 638.2h1.5" stroke="#808080" stroke-width="0.600" opacity="0.55"/><path d="M1251.300 649.6h1.5" stroke="#808080" stroke-width="0.600" opacity="0.55"/><path d="M1251.300 661.1h2.6" stroke="#808080" stroke-width="0.600" opacity="0.9"/></svg>
<div style="left:1211.5px;top:665px;width:7px;height:7px;background:#2e2e2e;border-radius:1px"></div>
<span class="t" style="left:1195.0px;width:40px;text-align:center;top:667px;font-size:4.6px;line-height:4.6px;color:#c0c0c0;transform:translateY(0.66px) rotate(0.01deg);">S</span>
<div style="left:1235px;top:665px;width:7px;height:7px;background:#2e2e2e;border-radius:1px"></div>
<span class="t" style="left:1218.5px;width:40px;text-align:center;top:667px;font-size:4.6px;line-height:4.6px;color:#c0c0c0;transform:translateY(0.66px) rotate(0.01deg);">S</span>
</body></html>
